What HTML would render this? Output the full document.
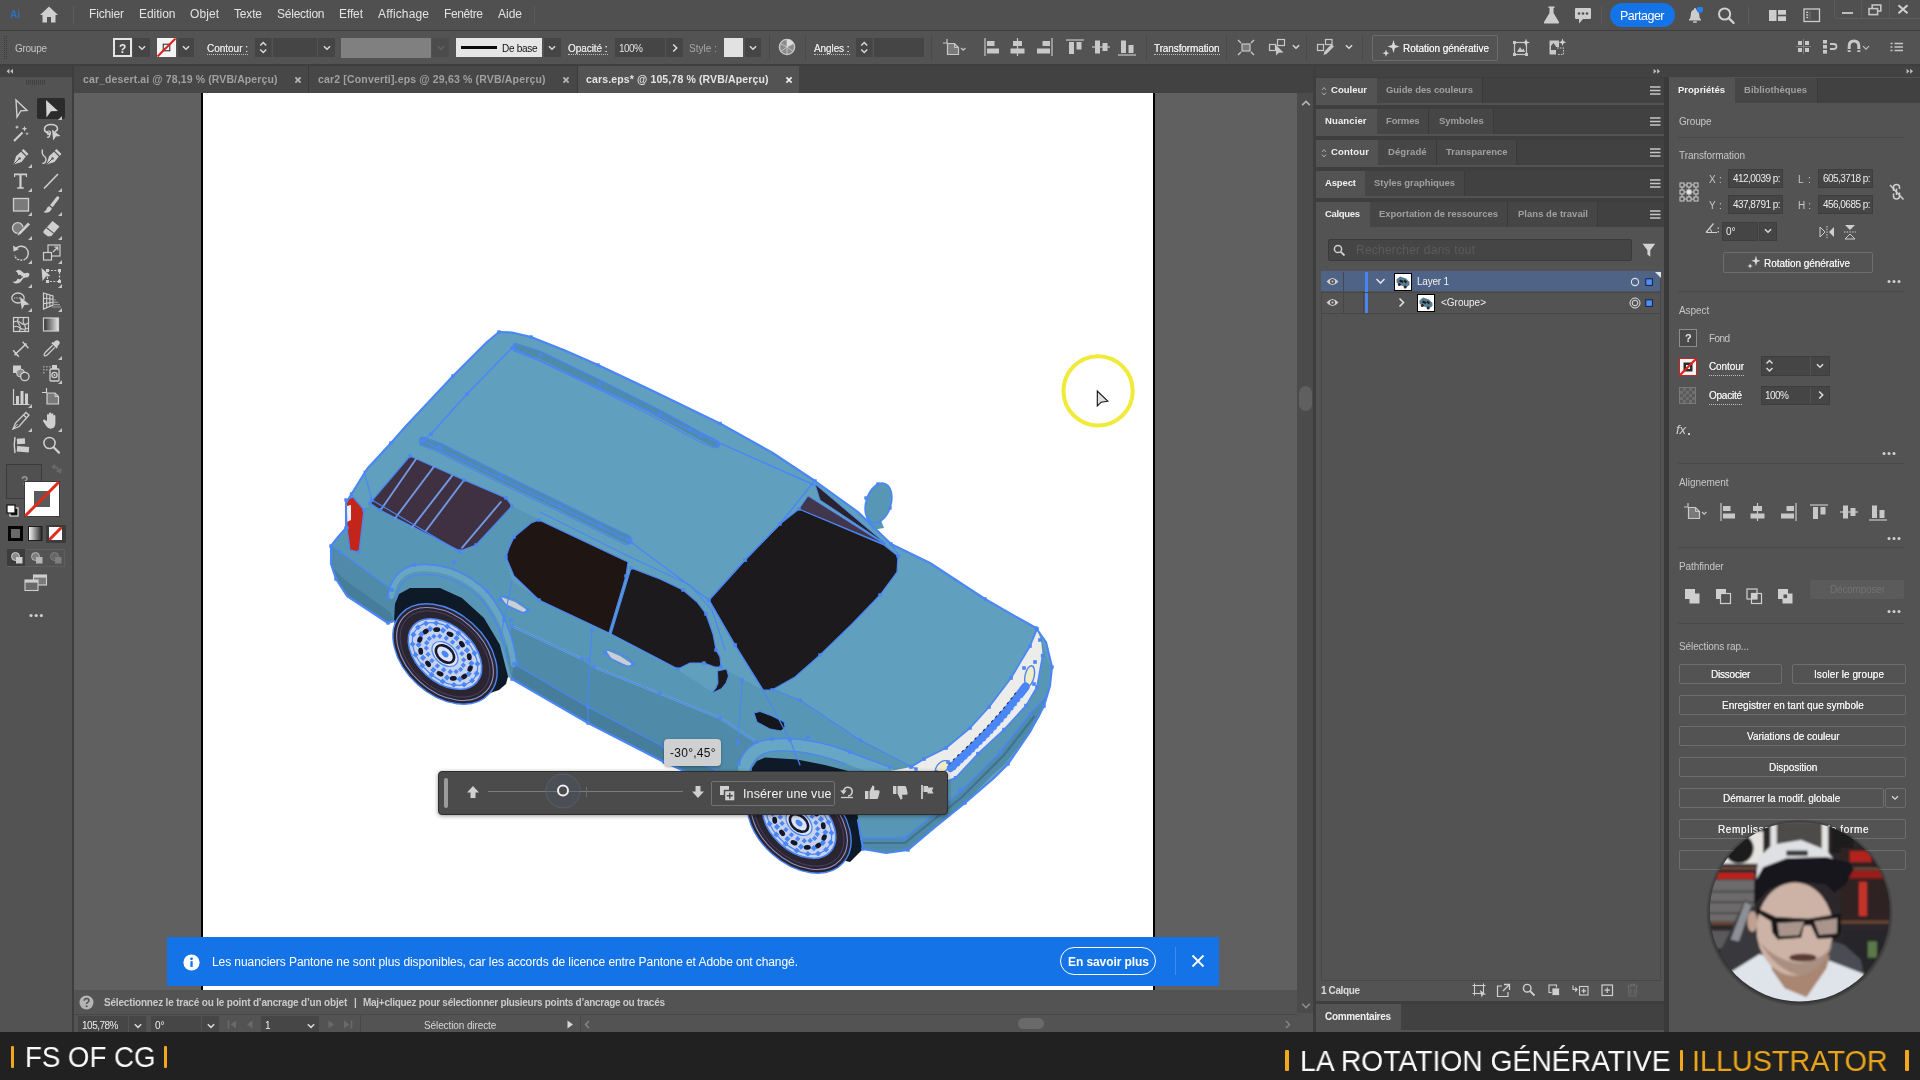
<!DOCTYPE html>
<html><head><meta charset="utf-8"><title>Illustrator</title>
<style>
html,body{margin:0;padding:0;background:#535353;overflow:hidden;}
body{width:1920px;height:1080px;position:relative;overflow:hidden;font-family:"Liberation Sans",sans-serif;}
.b{position:absolute;display:block;}
.t{position:absolute;white-space:nowrap;display:block;will-change:transform;}
.u{border-bottom:1px dotted #c0c0c0;padding-bottom:1px;}
</style></head><body>
<div class="b" style="left:0px;top:0px;width:1920px;height:1080px;background:#535353;"></div>
<div class="b" style="left:0px;top:0px;width:1920px;height:30px;background:#505050;"></div>
<div class="b" style="left:0px;top:30px;width:1920px;height:1px;background:#3d3d3d;"></div>
<div class="b" style="left:0px;top:31px;width:1920px;height:33px;background:#535353;"></div>
<div class="b" style="left:0px;top:64px;width:1920px;height:2px;background:#3e3e3e;"></div>
<div class="b" style="left:0px;top:66px;width:1920px;height:27px;background:#424242;"></div>
<div class="b" style="left:74px;top:93px;width:1223px;height:900px;background:#606060;"></div>
<div class="b" style="left:201px;top:93px;width:954px;height:897px;background:#fff;border-left:2px solid #000;border-right:2px solid #000;box-sizing:border-box;"></div>
<div class="b" style="left:0px;top:66px;width:72px;height:968px;background:#535353;"></div>
<div class="b" style="left:72px;top:66px;width:2px;height:968px;background:#3e3e3e;"></div>
<div class="b" style="left:0px;top:66px;width:72px;height:11px;background:#424242;"></div>
<div class="b" style="left:1297px;top:93px;width:17px;height:920px;background:#4b4b4b;"></div>
<div class="b" style="left:1313px;top:66px;width:3px;height:968px;background:#3e3e3e;"></div>
<div class="b" style="left:74px;top:990px;width:1223px;height:23px;background:#535353;"></div>
<div class="b" style="left:74px;top:1013px;width:1239px;height:21px;background:#535353;"></div>
<div class="b" style="left:1316px;top:66px;width:348px;height:968px;background:#3e3e3e;"></div>
<div class="b" style="left:1664px;top:66px;width:5px;height:968px;background:#3a3a3a;"></div>
<div class="b" style="left:1669px;top:66px;width:251px;height:968px;background:#535353;"></div>
<div class="b" style="left:1316px;top:66px;width:604px;height:11px;background:#424242;"></div>
<div class="b" style="left:0px;top:1034px;width:1920px;height:46px;background:#212121;"></div>
<span class="t" style="left:10.0px;top:10.0px;font-size:10px;line-height:10px;color:#2d6fc4;font-weight:bold;">Ai</span>
<svg class="b" style="left:39px;top:5px;" width="20" height="19" viewBox="0 0 20 19"><path d="M10 1.5 L19 10 H16.5 V17.5 H12 V12 H8 V17.5 H3.5 V10 H1 Z" fill="#cfcfcf"/></svg>
<div class="b" style="left:73px;top:6px;width:1px;height:18px;background:#5e5e5e;"></div>
<span class="t" style="left:89.0px;top:8.0px;font-size:12px;line-height:12px;color:#e2e2e2;letter-spacing:-0.168px;">Fichier</span>
<span class="t" style="left:139.0px;top:8.0px;font-size:12px;line-height:12px;color:#e2e2e2;letter-spacing:-0.032px;">Edition</span>
<span class="t" style="left:190.0px;top:8.0px;font-size:12px;line-height:12px;color:#e2e2e2;letter-spacing:0.080px;">Objet</span>
<span class="t" style="left:234.0px;top:8.0px;font-size:12px;line-height:12px;color:#e2e2e2;letter-spacing:-0.170px;">Texte</span>
<span class="t" style="left:277.0px;top:8.0px;font-size:12px;line-height:12px;color:#e2e2e2;letter-spacing:-0.233px;">Sélection</span>
<span class="t" style="left:339.0px;top:8.0px;font-size:12px;line-height:12px;color:#e2e2e2;letter-spacing:-0.116px;">Effet</span>
<span class="t" style="left:378.0px;top:8.0px;font-size:12px;line-height:12px;color:#e2e2e2;letter-spacing:0.148px;">Affichage</span>
<span class="t" style="left:444.0px;top:8.0px;font-size:12px;line-height:12px;color:#e2e2e2;letter-spacing:-0.393px;">Fenêtre</span>
<span class="t" style="left:498.0px;top:8.0px;font-size:12px;line-height:12px;color:#e2e2e2;letter-spacing:-0.006px;">Aide</span>
<div class="b" style="left:534px;top:6px;width:1px;height:18px;background:#5a5a5a;"></div>
<svg class="b" style="left:1542px;top:5px;" width="19" height="20" viewBox="0 0 19 20"><path d="M6.5 1.5 H12.5 V3 H11.5 V8 L17 17 Q17.5 18.5 16 18.5 H3 Q1.5 18.5 2 17 L7.5 8 V3 H6.5 Z" fill="#cdcdcd"/></svg>
<svg class="b" style="left:1574px;top:7px;" width="18" height="18" viewBox="0 0 18 18"><path d="M2 1 H16 Q17 1 17 2 V11 Q17 12 16 12 H9 L5 16.5 V12 H2 Q1 12 1 11 V2 Q1 1 2 1 Z" fill="#cdcdcd"/><circle cx="5" cy="6.5" r="1.3" fill="#505050"/><circle cx="9" cy="6.5" r="1.3" fill="#505050"/><circle cx="13" cy="6.5" r="1.3" fill="#505050"/></svg>
<div class="b" style="left:1601px;top:6px;width:1px;height:18px;background:#5a5a5a;"></div>
<div class="b" style="left:1609.5px;top:3px;width:65px;height:24px;background:#1473e6;border-radius:12px;"></div>
<span class="t" style="left:1620.0px;top:10.0px;font-size:12.5px;line-height:12.5px;color:#fff;letter-spacing:-0.491px;">Partager</span>
<svg class="b" style="left:1686px;top:7px;" width="18" height="17" viewBox="0 0 18 17"><path d="M8 1.5 Q9 0.5 10 1.5 V2.6 Q13.2 3.6 13.2 7.5 Q13.2 11 15 12.6 V13.4 H3 V12.6 Q4.8 11 4.8 7.5 Q4.8 3.6 8 2.6 Z" fill="#cdcdcd"/><rect x="7" y="14.2" width="4" height="1.6" rx="0.8" fill="#cdcdcd"/><circle cx="13.8" cy="2.6" r="3.2" fill="#2680eb"/></svg>
<svg class="b" style="left:1716px;top:6px;" width="20" height="19" viewBox="0 0 20 19"><circle cx="8.6" cy="8" r="5.6" fill="none" stroke="#d0d0d0" stroke-width="2"/><path d="M12.8 12.2 L17.6 17" stroke="#d0d0d0" stroke-width="2.4" stroke-linecap="round"/></svg>
<div class="b" style="left:1748px;top:7px;width:1px;height:17px;background:#5e5e5e;"></div>
<svg class="b" style="left:1768px;top:9px;" width="19" height="13" viewBox="0 0 19 13"><rect x="1" y="1" width="7.5" height="11" fill="#cdcdcd"/><rect x="10" y="1" width="8" height="4.7" fill="#cdcdcd"/><rect x="10" y="7.3" width="8" height="4.7" fill="#cdcdcd"/></svg>
<svg class="b" style="left:1803px;top:8px;" width="18" height="15" viewBox="0 0 18 15"><rect x="1" y="1" width="15.5" height="12.5" fill="none" stroke="#cdcdcd" stroke-width="1.3"/><rect x="3.2" y="3.6" width="2" height="1.4" fill="#cdcdcd"/><rect x="3.2" y="6.2" width="2" height="1.4" fill="#cdcdcd"/><rect x="3.2" y="8.8" width="2" height="1.4" fill="#cdcdcd"/><path d="M7 3 V11.5" stroke="#777" stroke-width="1"/></svg>
<div class="b" style="left:1834px;top:-2px;width:86px;height:21px;border:1px solid #5c5c5c;border-right:0;border-radius:0 0 0 4px;box-sizing:border-box;"></div>
<div class="b" style="left:1861px;top:0px;width:1px;height:18px;background:#5a5a5a;"></div>
<div class="b" style="left:1889px;top:0px;width:1px;height:18px;background:#5a5a5a;"></div>
<div class="b" style="left:1842px;top:11.5px;width:10.5px;height:2.5px;background:#bdbdbd;"></div>
<svg class="b" style="left:1868px;top:4px;" width="14" height="12" viewBox="0 0 14 12"><rect x="4.2" y="1" width="8.6" height="6" fill="none" stroke="#c4c4c4" stroke-width="1.6"/><rect x="1" y="4.6" width="8.6" height="6" fill="#505050" stroke="#c4c4c4" stroke-width="1.6"/></svg>
<svg class="b" style="left:1897px;top:4px;" width="12" height="11" viewBox="0 0 12 11"><path d="M1.5 1.2 L10.5 9.2 M10.5 1.2 L1.5 9.2" stroke="#d0d0d0" stroke-width="2"/></svg>
<svg class="b" style="left:3px;top:35px;" width="6" height="26" viewBox="0 0 6 26"><rect x="1" y="1" width="1" height="1" fill="#3c3c3c"/><rect x="1" y="3" width="1" height="1" fill="#3c3c3c"/><rect x="1" y="5" width="1" height="1" fill="#3c3c3c"/><rect x="1" y="7" width="1" height="1" fill="#3c3c3c"/><rect x="1" y="9" width="1" height="1" fill="#3c3c3c"/><rect x="1" y="11" width="1" height="1" fill="#3c3c3c"/><rect x="1" y="13" width="1" height="1" fill="#3c3c3c"/><rect x="1" y="15" width="1" height="1" fill="#3c3c3c"/><rect x="1" y="17" width="1" height="1" fill="#3c3c3c"/><rect x="1" y="19" width="1" height="1" fill="#3c3c3c"/><rect x="1" y="21" width="1" height="1" fill="#3c3c3c"/><rect x="1" y="23" width="1" height="1" fill="#3c3c3c"/><rect x="3" y="1" width="1" height="1" fill="#3c3c3c"/><rect x="3" y="3" width="1" height="1" fill="#3c3c3c"/><rect x="3" y="5" width="1" height="1" fill="#3c3c3c"/><rect x="3" y="7" width="1" height="1" fill="#3c3c3c"/><rect x="3" y="9" width="1" height="1" fill="#3c3c3c"/><rect x="3" y="11" width="1" height="1" fill="#3c3c3c"/><rect x="3" y="13" width="1" height="1" fill="#3c3c3c"/><rect x="3" y="15" width="1" height="1" fill="#3c3c3c"/><rect x="3" y="17" width="1" height="1" fill="#3c3c3c"/><rect x="3" y="19" width="1" height="1" fill="#3c3c3c"/><rect x="3" y="21" width="1" height="1" fill="#3c3c3c"/><rect x="3" y="23" width="1" height="1" fill="#3c3c3c"/></svg>
<span class="t" style="left:15.0px;top:44.0px;font-size:10px;line-height:10px;color:#c4c4c4;letter-spacing:-0.272px;">Groupe</span>
<div class="b" style="left:113px;top:38px;width:19px;height:19px;background:#4a4a4a;border:2px solid #e4e4e4;box-sizing:border-box;"></div>
<span class="t" style="left:119.2px;top:43.0px;font-size:12px;line-height:12px;color:#e6e6e6;font-weight:bold;">?</span>
<div class="b" style="left:133px;top:38px;width:16.5px;height:19px;background:#454545;"></div>
<svg class="b" style="left:135.5px;top:42.8px;" width="12" height="10" viewBox="0 0 12 10"><path d="M2.9 3.2 l3.1 3.1 l3.1 -3.1" fill="none" stroke="#d8d8d8" stroke-width="1.5"/></svg>
<svg class="b" style="left:157px;top:38px;" width="19" height="19" viewBox="0 0 19 19"><rect width="19" height="19" fill="#f4f4f4"/><rect x="6.2" y="6.2" width="6.6" height="6.6" fill="none" stroke="#222" stroke-width="1"/><path d="M0.5 18.5 L18.5 0.5" stroke="#e0201a" stroke-width="2"/></svg>
<div class="b" style="left:177.5px;top:38px;width:16.5px;height:19px;background:#454545;"></div>
<svg class="b" style="left:179.7px;top:42.8px;" width="12" height="10" viewBox="0 0 12 10"><path d="M2.9 3.2 l3.1 3.1 l3.1 -3.1" fill="none" stroke="#d8d8d8" stroke-width="1.5"/></svg>
<span class="t" style="left:207.0px;top:44.0px;font-size:10px;line-height:10px;color:#e4e4e4;letter-spacing:-0.018px;text-shadow:0 0 0.4px #e4e4e4;">Contour :</span>
<div class="b" style="left:207px;top:52.6px;width:41px;height:1px;border-bottom:1px dotted #bdbdbd;"></div>
<svg class="b" style="left:255px;top:38px;" width="16.5" height="19" viewBox="0 0 16.5 19"><rect width="16.5" height="19" fill="#454545"/><path d="M5.25 7.5 l3 -3 l3 3 M5.25 11.5 l3 3 l3 -3" fill="none" stroke="#d8d8d8" stroke-width="1.5"/></svg>
<div class="b" style="left:272.5px;top:38px;width:44.5px;height:19px;background:#454545;"></div>
<div class="b" style="left:318px;top:38px;width:17px;height:19px;background:#454545;"></div>
<svg class="b" style="left:320.5px;top:42.8px;" width="12" height="10" viewBox="0 0 12 10"><path d="M2.9 3.2 l3.1 3.1 l3.1 -3.1" fill="none" stroke="#d8d8d8" stroke-width="1.5"/></svg>
<div class="b" style="left:341px;top:37.5px;width:89.5px;height:20px;background:#808080;"></div>
<div class="b" style="left:432px;top:38px;width:17px;height:19px;background:#4c4c4c;"></div>
<svg class="b" style="left:434.5px;top:42.8px;" width="12" height="10" viewBox="0 0 12 10"><path d="M2.9 3.2 l3.1 3.1 l3.1 -3.1" fill="none" stroke="#636363" stroke-width="1.5"/></svg>
<div class="b" style="left:456px;top:38px;width:86px;height:19px;background:#e6e6e6;"></div>
<div class="b" style="left:461px;top:45.7px;width:36px;height:3.3px;background:#0a0a0a;"></div>
<span class="t" style="left:501.5px;top:44.0px;font-size:10px;line-height:10px;color:#111;letter-spacing:-0.292px;">De base</span>
<div class="b" style="left:544px;top:38px;width:16.5px;height:19px;background:#454545;"></div>
<svg class="b" style="left:546px;top:42.8px;" width="12" height="10" viewBox="0 0 12 10"><path d="M2.9 3.2 l3.1 3.1 l3.1 -3.1" fill="none" stroke="#d8d8d8" stroke-width="1.5"/></svg>
<span class="t" style="left:568.0px;top:44.0px;font-size:10px;line-height:10px;color:#e4e4e4;letter-spacing:-0.066px;text-shadow:0 0 0.4px #e4e4e4;">Opacité :</span>
<div class="b" style="left:568px;top:52.6px;width:39.5px;height:1px;border-bottom:1px dotted #bdbdbd;"></div>
<div class="b" style="left:615px;top:38px;width:50px;height:19px;background:#454545;"></div>
<span class="t" style="left:618.5px;top:44.0px;font-size:10px;line-height:10px;color:#e0e0e0;letter-spacing:-0.527px;">100%</span>
<div class="b" style="left:666px;top:38px;width:16.5px;height:19px;background:#454545;"></div>
<svg class="b" style="left:669.5px;top:41.5px;" width="10" height="12" viewBox="0 0 10 12"><path d="M3.2 2.5 l3.5 3.5 l-3.5 3.5" fill="none" stroke="#d8d8d8" stroke-width="1.6"/></svg>
<span class="t" style="left:689.0px;top:44.0px;font-size:10px;line-height:10px;color:#a6a6a6;letter-spacing:0.035px;">Style :</span>
<div class="b" style="left:724px;top:38px;width:19px;height:19px;background:#e2e2e2;"></div>
<div class="b" style="left:744.5px;top:38px;width:16.5px;height:19px;background:#454545;"></div>
<svg class="b" style="left:746.5px;top:42.8px;" width="12" height="10" viewBox="0 0 12 10"><path d="M2.9 3.2 l3.1 3.1 l3.1 -3.1" fill="none" stroke="#d8d8d8" stroke-width="1.5"/></svg>
<div class="b" style="left:769px;top:34px;width:1px;height:27px;background:#4a4a4a;"></div>
<svg class="b" style="left:778px;top:38px;" width="18" height="18" viewBox="0 0 18 18"><circle cx="9" cy="9" r="7.6" fill="#8a8a8a" stroke="#c8c8c8" stroke-width="1.4"/><path d="M9 9 L9 1.6 M9 9 L15.6 5.5 M9 9 L15 13.4 M9 9 L9 16.4 M9 9 L3 13.4 M9 9 L2.4 5.5" stroke="#c8c8c8" stroke-width="0.9"/><path d="M9 9 L9 1.6 A7.4 7.4 0 0 1 15.6 5.5 Z" fill="#dcdcdc"/></svg>
<div class="b" style="left:805px;top:34px;width:1px;height:27px;background:#4a4a4a;"></div>
<span class="t" style="left:814.0px;top:44.0px;font-size:10px;line-height:10px;color:#e4e4e4;letter-spacing:-0.091px;text-shadow:0 0 0.4px #e4e4e4;">Angles :</span>
<div class="b" style="left:814px;top:52.6px;width:35.5px;height:1px;border-bottom:1px dotted #bdbdbd;"></div>
<svg class="b" style="left:856px;top:38px;" width="16.5" height="19" viewBox="0 0 16.5 19"><rect width="16.5" height="19" fill="#454545"/><path d="M5.25 7.5 l3 -3 l3 3 M5.25 11.5 l3 3 l3 -3" fill="none" stroke="#d8d8d8" stroke-width="1.5"/></svg>
<div class="b" style="left:873.5px;top:38px;width:50.5px;height:19px;background:#454545;"></div>
<div class="b" style="left:931px;top:34px;width:1px;height:27px;background:#4a4a4a;"></div>
<svg class="b" style="left:942px;top:38px;" width="25" height="18" viewBox="0 0 25 18"><path d="M5 1 V5 M1 5 H5" stroke="#c8c8c8" stroke-width="1.2" fill="none"/><path d="M5.5 5.5 H12.5 L16.5 9.5 V16.5 H5.5 Z" fill="#7a7a7a" stroke="#c8c8c8" stroke-width="1.2"/><path d="M12.5 5.5 V9.5 H16.5" fill="none" stroke="#c8c8c8" stroke-width="1"/><path d="M19 10 l2.2 2.2 l2.2 -2.2" fill="none" stroke="#c8c8c8" stroke-width="1.2"/></svg>
<svg class="b" style="left:984px;top:37.5px;" width="16" height="18" viewBox="0 0 16 18"><path d="M1 0 V18" stroke="#c8c8c8" stroke-width="1.2"/><rect x="3" y="3" width="7.5" height="5" fill="#c8c8c8"/><rect x="3" y="10.5" width="12" height="5" fill="#c8c8c8"/></svg>
<svg class="b" style="left:1010px;top:37.5px;" width="15" height="18" viewBox="0 0 15 18"><path d="M7.5 0 V18" stroke="#c8c8c8" stroke-width="1.2"/><rect x="3" y="3" width="9" height="5" fill="#c8c8c8"/><rect x="0.5" y="10.5" width="14" height="5" fill="#c8c8c8"/></svg>
<svg class="b" style="left:1036px;top:37.5px;" width="17" height="18" viewBox="0 0 17 18"><path d="M16 0 V18" stroke="#c8c8c8" stroke-width="1.2"/><rect x="6.5" y="3" width="7.5" height="5" fill="#c8c8c8"/><rect x="1" y="10.5" width="13" height="5" fill="#c8c8c8"/></svg>
<svg class="b" style="left:1066px;top:37.5px;" width="18" height="18" viewBox="0 0 18 18"><path d="M0 2 H18" stroke="#c8c8c8" stroke-width="1.2"/><rect x="3" y="4" width="5" height="12" fill="#c8c8c8"/><rect x="10.5" y="4" width="5" height="7.5" fill="#c8c8c8"/></svg>
<svg class="b" style="left:1092px;top:37.5px;" width="18" height="18" viewBox="0 0 18 18"><path d="M0 9 H18" stroke="#c8c8c8" stroke-width="1.2"/><rect x="3" y="2.5" width="5" height="13" fill="#c8c8c8"/><rect x="10.5" y="5" width="5" height="8" fill="#c8c8c8"/></svg>
<svg class="b" style="left:1118px;top:37.5px;" width="18" height="18" viewBox="0 0 18 18"><path d="M0 17 H18" stroke="#c8c8c8" stroke-width="1.2"/><rect x="3" y="2.5" width="5" height="12.5" fill="#c8c8c8"/><rect x="10.5" y="7" width="5" height="8" fill="#c8c8c8"/></svg>
<div class="b" style="left:1146px;top:34px;width:1px;height:27px;background:#4a4a4a;"></div>
<span class="t" style="left:1154.0px;top:44.0px;font-size:10px;line-height:10px;color:#ececec;letter-spacing:-0.107px;text-shadow:0 0 0.4px #ececec;">Transformation</span>
<div class="b" style="left:1154px;top:52.6px;width:65.5px;height:1px;border-bottom:1px dotted #bdbdbd;"></div>
<div class="b" style="left:1226px;top:34px;width:1px;height:27px;background:#4a4a4a;"></div>
<svg class="b" style="left:1237px;top:39px;" width="18" height="17" viewBox="0 0 18 17"><rect x="5" y="5" width="8" height="7" fill="#7a7a7a" stroke="#c8c8c8" stroke-width="1.2"/><path d="M1 1 L4 4 M17 1 L14 4 M1 16 L4 13 M17 16 L14 13" stroke="#c8c8c8" stroke-width="1.4"/><path d="M1.5 4.5 V1.5 H4.5 M13.5 1.5 H16.5 V4.5 M1.5 12.5 V15.5 H4.5 M16.5 12.5 V15.5 H13.5" fill="none" stroke="#c8c8c8" stroke-width="0"/></svg>
<svg class="b" style="left:1268px;top:38px;" width="19" height="19" viewBox="0 0 19 19"><rect x="9.5" y="1.5" width="7" height="6" fill="none" stroke="#c8c8c8" stroke-width="1.2"/><rect x="1.5" y="6.5" width="6" height="6" fill="none" stroke="#c8c8c8" stroke-width="1.2"/><path d="M8 7 V17.5 L10.8 14.8 L15.5 14.5 Z" fill="#c8c8c8"/></svg>
<svg class="b" style="left:1289.5px;top:42px;" width="12" height="10" viewBox="0 0 12 10"><path d="M2.9 3.2 l3.1 3.1 l3.1 -3.1" fill="none" stroke="#d8d8d8" stroke-width="1.5"/></svg>
<div class="b" style="left:1306px;top:34px;width:1px;height:27px;background:#4a4a4a;"></div>
<svg class="b" style="left:1316px;top:38px;" width="20" height="19" viewBox="0 0 20 19"><rect x="1.5" y="6.5" width="6" height="6" fill="none" stroke="#c8c8c8" stroke-width="1.2"/><rect x="9.5" y="1.5" width="6.5" height="5" fill="none" stroke="#c8c8c8" stroke-width="1.2"/><path d="M15.5 6 L18 8.5 L10.5 16 L7.5 17 L8.5 13.5 Z" fill="#c8c8c8"/></svg>
<svg class="b" style="left:1343px;top:42px;" width="12" height="10" viewBox="0 0 12 10"><path d="M2.9 3.2 l3.1 3.1 l3.1 -3.1" fill="none" stroke="#d8d8d8" stroke-width="1.5"/></svg>
<div class="b" style="left:1362px;top:34px;width:1px;height:27px;background:#4a4a4a;"></div>
<div class="b" style="left:1372px;top:34.5px;width:126px;height:26px;border:1px solid #6c6c6c;border-radius:2px;box-sizing:border-box;"></div>
<svg class="b" style="left:1382px;top:39px;" width="18" height="18" viewBox="0 0 18 18"><path d="M11.5 1 L13 6 L17.5 7.5 L13 9 L11.5 14 L10 9 L5.5 7.5 L10 6 Z" fill="#d8d8d8"/><path d="M4 10.5 L5 13.3 L7.6 14.2 L5 15.1 L4 17.8 L3 15.1 L0.4 14.2 L3 13.3 Z" fill="#d8d8d8"/></svg>
<span class="t" style="left:1403.0px;top:44.0px;font-size:10px;line-height:10px;color:#f0f0f0;letter-spacing:-0.041px;text-shadow:0 0 0.4px #f0f0f0;">Rotation générative</span>
<svg class="b" style="left:1512px;top:38px;" width="19" height="19" viewBox="0 0 19 19"><rect x="2.5" y="4.5" width="12" height="12" fill="none" stroke="#c8c8c8" stroke-width="1.2"/><rect x="1" y="3" width="3" height="3" fill="#c8c8c8"/><rect x="1" y="15" width="3" height="3" fill="#c8c8c8"/><rect x="13" y="15" width="3" height="3" fill="#c8c8c8"/><path d="M5 14 L8 9 L10 12 L11.5 10.5 L13 14 Z" fill="#c8c8c8"/><path d="M14 0.5 L15 3.5 L18 4.5 L15 5.5 L14 8.5 L13 5.5 L10 4.5 L13 3.5 Z" fill="#d4d4d4"/></svg>
<svg class="b" style="left:1548px;top:38px;" width="19" height="19" viewBox="0 0 19 19"><path d="M1.5 2.5 H11 V9 H8 V16.5 H1.5 Z" fill="#c8c8c8"/><path d="M3 8 L5.5 5 L8 8.5 L8 12 L3 12 Z" fill="#535353"/><path d="M9 10 H15.5 V16.5 H9" fill="none" stroke="#c8c8c8" stroke-width="1.1" stroke-dasharray="1.6 1.2"/><path d="M14.5 0.5 L15.5 3.3 L18.3 4.3 L15.5 5.3 L14.5 8.1 L13.5 5.3 L10.7 4.3 L13.5 3.3 Z" fill="#d4d4d4"/></svg>
<svg class="b" style="left:1796px;top:39px;" width="15" height="15" viewBox="0 0 15 15"><rect x="2" y="2" width="4" height="4" fill="#c8c8c8"/><rect x="9" y="2" width="4" height="4" fill="#c8c8c8"/><rect x="2" y="9" width="4" height="4" fill="#c8c8c8"/><rect x="9" y="9" width="4" height="4" fill="#c8c8c8"/><path d="M7.5 0 V15 M0 7.5 H15" stroke="#8c8c8c" stroke-width="0.8"/></svg>
<svg class="b" style="left:1822px;top:39px;" width="16" height="16" viewBox="0 0 16 16"><rect x="1" y="1" width="4" height="3.6" fill="#c8c8c8"/><rect x="1" y="6" width="4" height="3.6" fill="#c8c8c8"/><rect x="1" y="11" width="4" height="3.6" fill="#c8c8c8"/><path d="M8 5 H11.5 Q14.5 5 14.5 7.5 Q14.5 10 11.5 10 H8" fill="none" stroke="#c8c8c8" stroke-width="1.8"/></svg>
<svg class="b" style="left:1847px;top:39px;" width="14" height="15" viewBox="0 0 14 15"><path d="M2.2 13 V7 Q2.2 2 7 2 Q11.8 2 11.8 7 V13" fill="none" stroke="#c8c8c8" stroke-width="3"/><path d="M0.5 10.6 H4 M10 10.6 H13.5" stroke="#535353" stroke-width="1.1"/></svg>
<svg class="b" style="left:1860px;top:42.5px;" width="12" height="10" viewBox="0 0 12 10"><path d="M3 3.2 l3 3 l3 -3" fill="none" stroke="#bdbdbd" stroke-width="1.2"/></svg>
<svg class="b" style="left:1890px;top:42px;" width="14" height="10" viewBox="0 0 14 10"><path d="M0.5 1.5 H2.5 M0.5 5 H2.5 M0.5 8.5 H2.5" stroke="#c8c8c8" stroke-width="1.6"/><path d="M4.5 1.5 H13 M4.5 5 H13 M4.5 8.5 H13" stroke="#c8c8c8" stroke-width="1.3"/></svg>
<div class="b" style="left:74px;top:66px;width:234px;height:27px;background:#474747;"></div>
<div class="b" style="left:308px;top:66px;width:1px;height:27px;background:#3a3a3a;"></div>
<div class="b" style="left:309px;top:66px;width:268px;height:27px;background:#474747;"></div>
<div class="b" style="left:577px;top:66px;width:1px;height:27px;background:#3a3a3a;"></div>
<div class="b" style="left:578px;top:66px;width:221px;height:27px;background:#535353;"></div>
<span class="t" style="left:83.0px;top:74.0px;font-size:10.5px;line-height:10.5px;color:#a0a0a0;font-weight:bold;letter-spacing:0.118px;">car_desert.ai @ 78,19 % (RVB/Aperçu)</span>
<span class="t" style="left:318.0px;top:74.0px;font-size:10.5px;line-height:10.5px;color:#a0a0a0;font-weight:bold;letter-spacing:0.166px;">car2 [Converti].eps @ 29,63 % (RVB/Aperçu)</span>
<span class="t" style="left:586.0px;top:74.0px;font-size:10.5px;line-height:10.5px;color:#e4e4e4;font-weight:bold;letter-spacing:0.137px;">cars.eps* @ 105,78 % (RVB/Aperçu)</span>
<svg class="b" style="left:293.5px;top:75.5px;" width="8" height="8" viewBox="0 0 8 8"><path d="M1.4 1.4 L6.6 6.6 M6.6 1.4 L1.4 6.6" stroke="#b8b8b8" stroke-width="1.7"/></svg>
<svg class="b" style="left:561.5px;top:75.5px;" width="8" height="8" viewBox="0 0 8 8"><path d="M1.4 1.4 L6.6 6.6 M6.6 1.4 L1.4 6.6" stroke="#b8b8b8" stroke-width="1.7"/></svg>
<svg class="b" style="left:784.5px;top:75.5px;" width="8" height="8" viewBox="0 0 8 8"><path d="M1.4 1.4 L6.6 6.6 M6.6 1.4 L1.4 6.6" stroke="#ececec" stroke-width="1.7"/></svg>
<svg class="b" style="left:6px;top:67.5px;" width="8" height="7" viewBox="0 0 8 7"><path d="M3.4 0.8 L0.6 3.3 L3.4 5.8 Z M7 0.8 L4.2 3.3 L7 5.8 Z" fill="#c0c0c0"/></svg>
<svg class="b" style="left:24.5px;top:79.5px;" width="22" height="6" viewBox="0 0 22 6"><rect x="1" y="0" width="1" height="5" fill="#414141"/><rect x="3" y="0" width="1" height="5" fill="#414141"/><rect x="5" y="0" width="1" height="5" fill="#414141"/><rect x="7" y="0" width="1" height="5" fill="#414141"/><rect x="9" y="0" width="1" height="5" fill="#414141"/><rect x="11" y="0" width="1" height="5" fill="#414141"/><rect x="13" y="0" width="1" height="5" fill="#414141"/><rect x="15" y="0" width="1" height="5" fill="#414141"/><rect x="17" y="0" width="1" height="5" fill="#414141"/><rect x="19" y="0" width="1" height="5" fill="#414141"/></svg>
<svg class="b" style="left:1653px;top:67.5px;" width="8" height="7" viewBox="0 0 8 7"><path d="M0.6 0.8 L3.4 3.3 L0.6 5.8 Z M4.2 0.8 L7 3.3 L4.2 5.8 Z" fill="#c0c0c0"/></svg>
<svg class="b" style="left:1906px;top:67.5px;" width="8" height="7" viewBox="0 0 8 7"><path d="M0.6 0.8 L3.4 3.3 L0.6 5.8 Z M4.2 0.8 L7 3.3 L4.2 5.8 Z" fill="#c0c0c0"/></svg>
<div class="b" style="left:37px;top:97.5px;width:28px;height:21.5px;background:#2b2b2b;border-radius:2px;"></div>
<svg class="b" style="left:9px;top:96.5px;" width="24" height="24" viewBox="0 0 24 24"><path d="M7 3 L18 13.5 L11.8 13.9 L8 20 Z" fill="none" stroke="#cfcfcf" stroke-width="1.4" stroke-linejoin="miter"/></svg>
<svg class="b" style="left:39px;top:96.5px;" width="24" height="24" viewBox="0 0 24 24"><path d="M7 3 L19 14 L12 14.3 L7.5 20.5 Z" fill="#d4d4d4"/><path d="M23 19 V23 H19 Z" fill="#c4c4c4"/></svg>
<svg class="b" style="left:9px;top:120.5px;" width="24" height="24" viewBox="0 0 24 24"><path d="M5 20 L13.5 11.5" stroke="#cfcfcf" stroke-width="2.2"/><path d="M15.5 5 l.8 2 l2 .8 l-2 .8 l-.8 2 l-.8 -2 l-2 -.8 l2 -.8 Z M8 4 l.6 1.5 l1.5 .6 l-1.5 .6 l-.6 1.5 l-.6 -1.5 l-1.5 -.6 l1.5 -.6 Z M18 11 l.5 1.2 l1.2 .5 l-1.2 .5 l-.5 1.2 l-.5 -1.2 l-1.2 -.5 l1.2 -.5 Z" fill="#cfcfcf"/></svg>
<svg class="b" style="left:39px;top:120.5px;" width="24" height="24" viewBox="0 0 24 24"><path d="M9.5 12 Q5 11 5.5 7.5 Q6.5 3.5 12 3.5 Q18 3.5 18.5 7.5 Q18.5 10 16 10.5 M9.5 12 Q11.5 12.5 10.5 15 Q9.5 17 8 16" fill="none" stroke="#cfcfcf" stroke-width="1.5"/><circle cx="9.8" cy="11.8" r="1.8" fill="none" stroke="#cfcfcf" stroke-width="1.2"/><path d="M13 8.5 L21.5 15 L17 15.6 L14.2 19.5 Z" fill="#cfcfcf"/></svg>
<svg class="b" style="left:9px;top:144.5px;" width="24" height="24" viewBox="0 0 24 24"><path d="M14.5 4 L19.5 9 L17.8 10.8 L12.7 5.8 Z" fill="#cfcfcf"/><path d="M12 6.8 L16.8 11.6 L12.5 17 L4.5 19.5 L7 11.2 Z" fill="#cfcfcf"/><path d="M5 19 L10 14" stroke="#535353" stroke-width="1"/><circle cx="10.6" cy="13.4" r="1.2" fill="#535353"/><path d="M23 19 V23 H19 Z" fill="#c4c4c4"/></svg>
<svg class="b" style="left:39px;top:144.5px;" width="24" height="24" viewBox="0 0 24 24"><g transform="translate(3,0)"><path d="M14.5 4 L19.5 9 L17.8 10.8 L12.7 5.8 Z" fill="#cfcfcf"/><path d="M12 6.8 L16.8 11.6 L12.5 17 L4.5 19.5 L7 11.2 Z" fill="#cfcfcf"/><path d="M5 19 L10 14" stroke="#535353" stroke-width="1"/><circle cx="10.6" cy="13.4" r="1.2" fill="#535353"/></g><path d="M3.5 4.5 Q2.5 9 5 11 Q8 13 6.5 16.5 Q5.5 19 3.5 18" fill="none" stroke="#cfcfcf" stroke-width="1.4"/></svg>
<svg class="b" style="left:9px;top:168.5px;" width="24" height="24" viewBox="0 0 24 24"><path d="M5 4.5 H18 V8 H16.8 V6.3 H12.6 V18.3 H14.8 V19.8 H8.2 V18.3 H10.4 V6.3 H6.2 V8 H5 Z" fill="#cfcfcf"/><path d="M23 19 V23 H19 Z" fill="#c4c4c4"/></svg>
<svg class="b" style="left:39px;top:168.5px;" width="24" height="24" viewBox="0 0 24 24"><path d="M5 19.5 L19 5" stroke="#cfcfcf" stroke-width="1.6"/><path d="M23 19 V23 H19 Z" fill="#c4c4c4"/></svg>
<svg class="b" style="left:9px;top:192.5px;" width="24" height="24" viewBox="0 0 24 24"><rect x="4.5" y="5.5" width="15" height="12.5" fill="#7a7a7a" stroke="#cfcfcf" stroke-width="1.3"/><path d="M23 19 V23 H19 Z" fill="#c4c4c4"/></svg>
<svg class="b" style="left:39px;top:192.5px;" width="24" height="24" viewBox="0 0 24 24"><path d="M19.5 3.5 Q20.8 4 20 5.8 L13.6 14.2 L11 12.2 L17.4 4 Q18.5 3 19.5 3.5 Z" fill="#cfcfcf"/><path d="M10.2 13.2 L12.8 15.2 Q12 18.5 8.5 19.5 Q6 20 4.5 19 Q7.5 17.5 7.8 15.5 Q8.3 13.5 10.2 13.2 Z" fill="#cfcfcf"/><path d="M23 19 V23 H19 Z" fill="#c4c4c4"/></svg>
<svg class="b" style="left:9px;top:216.5px;" width="24" height="24" viewBox="0 0 24 24"><circle cx="8.8" cy="11" r="5.3" fill="#7d7d7d" stroke="#cfcfcf" stroke-width="1.3"/><path d="M19 5.2 L21.3 7.4 L11.5 17.6 L8 19 L9.2 15.6 Z" fill="#cfcfcf" stroke="#535353" stroke-width="0.6"/><path d="M23 19 V23 H19 Z" fill="#c4c4c4"/></svg>
<svg class="b" style="left:39px;top:216.5px;" width="24" height="24" viewBox="0 0 24 24"><path d="M13.5 4 L20.5 9.5 L12.5 19 L9 19.5 L4.5 16 L4.5 14 Z" fill="#cfcfcf"/><path d="M7.6 10.8 L14.8 16.4" stroke="#535353" stroke-width="1.1"/><path d="M23 19 V23 H19 Z" fill="#c4c4c4"/></svg>
<svg class="b" style="left:9px;top:240.5px;" width="24" height="24" viewBox="0 0 24 24"><path d="M7.2 7.4 A7 7 0 1 1 5.6 14.5" fill="none" stroke="#cfcfcf" stroke-width="1.4" stroke-dasharray="2 0"/><path d="M5.6 14.5 A7 7 0 0 0 16.5 18" fill="none" stroke="#535353" stroke-width="1.4" stroke-dasharray="1.6 1.6"/><path d="M4 4.5 L4.6 10.4 L10 8.2 Z" fill="#cfcfcf"/><path d="M23 19 V23 H19 Z" fill="#c4c4c4"/></svg>
<svg class="b" style="left:39px;top:240.5px;" width="24" height="24" viewBox="0 0 24 24"><rect x="9" y="4" width="12" height="11" fill="none" stroke="#cfcfcf" stroke-width="1.2"/><rect x="4.5" y="11.5" width="8" height="7.5" fill="#535353" stroke="#cfcfcf" stroke-width="1.2"/><path d="M14 11 L18.5 6.5 M15.5 6.2 H18.8 V9.5" fill="none" stroke="#cfcfcf" stroke-width="1.2"/><path d="M23 19 V23 H19 Z" fill="#c4c4c4"/></svg>
<svg class="b" style="left:9px;top:264.5px;" width="24" height="24" viewBox="0 0 24 24"><path d="M3.5 16.5 Q7.5 17.5 9 13 Q10 7 6.5 6.5 Q9.5 3 13 6.5 Q15 9 17 8 Q19 7 20.5 9 Q20 13 17 12.5 Q14.5 12 13 15 Q11 18.5 7 18.5 Q4.5 18.5 3.5 16.5 Z" fill="#cfcfcf"/><circle cx="10.5" cy="12" r="2.2" fill="#535353"/><path d="M7 12 H14" stroke="#535353" stroke-width="0.9"/><path d="M23 19 V23 H19 Z" fill="#c4c4c4"/></svg>
<svg class="b" style="left:39px;top:264.5px;" width="24" height="24" viewBox="0 0 24 24"><rect x="8.5" y="5.5" width="12" height="11" fill="none" stroke="#cfcfcf" stroke-width="1.2" stroke-dasharray="2 1.4"/><rect x="7" y="4" width="3" height="3" fill="#cfcfcf"/><rect x="19" y="4" width="3" height="3" fill="#cfcfcf"/><rect x="7" y="15" width="3" height="3" fill="#cfcfcf"/><rect x="19" y="15" width="3" height="3" fill="#cfcfcf"/><path d="M2.5 3 L11.5 11 L7 11.4 L3.5 16 Z" fill="#cfcfcf"/><path d="M23 19 V23 H19 Z" fill="#c4c4c4"/></svg>
<svg class="b" style="left:9px;top:288.5px;" width="24" height="24" viewBox="0 0 24 24"><ellipse cx="9" cy="9" rx="6.2" ry="5" fill="none" stroke="#cfcfcf" stroke-width="1.3"/><path d="M5 9 H11" stroke="#cfcfcf" stroke-width="1.2" stroke-dasharray="1.2 1.2"/><path d="M11 8 L20.5 15.5 L15.5 16 L12.8 20.5 Z" fill="#cfcfcf"/><path d="M23 19 V23 H19 Z" fill="#c4c4c4"/></svg>
<svg class="b" style="left:39px;top:288.5px;" width="24" height="24" viewBox="0 0 24 24"><path d="M4.5 4 V20 L14 16 V7 Z" fill="none" stroke="#cfcfcf" stroke-width="1.2"/><path d="M4.5 9.3 L14 10.3 M4.5 14.6 L14 13.3 M7.7 5 V18.7 M10.9 6 V17.4" stroke="#cfcfcf" stroke-width="1.1"/><path d="M15 11 H17 M14.8 13.3 H19 M14.5 15.6 H21 M13 18 H22" stroke="#9a9a9a" stroke-width="1.2"/><path d="M23 19 V23 H19 Z" fill="#c4c4c4"/></svg>
<svg class="b" style="left:9px;top:312.5px;" width="24" height="24" viewBox="0 0 24 24"><rect x="4.5" y="4.5" width="15" height="14" fill="none" stroke="#cfcfcf" stroke-width="1.2"/><path d="M4.5 9 Q9 7 12 10 Q15 13 19.5 10 M4.5 14 Q8 12 11 15 Q14 17.5 19.5 15 M9.5 4.5 Q7.5 9 10.5 12 Q12.5 15 10 18.5 M15 4.5 Q13 8 15.5 11.5 Q17.5 15 15.5 18.5" fill="none" stroke="#cfcfcf" stroke-width="1.1"/></svg>
<svg class="b" style="left:39px;top:312.5px;" width="24" height="24" viewBox="0 0 24 24"><defs><linearGradient id="tg" x1="0" x2="1"><stop offset="0" stop-color="#2e2e2e"/><stop offset="1" stop-color="#e8e8e8"/></linearGradient></defs><rect x="4.5" y="5" width="15" height="13" fill="url(#tg)" stroke="#cfcfcf" stroke-width="1.2"/></svg>
<svg class="b" style="left:9px;top:336.5px;" width="24" height="24" viewBox="0 0 24 24"><path d="M6.5 17 L16.5 7.5" stroke="#cfcfcf" stroke-width="1.5"/><path d="M4.2 13.2 L9.8 19.8 M13.6 4.6 L19.4 11.2" stroke="#cfcfcf" stroke-width="1.4"/><path d="M5.2 18.4 L6 14.8 L9 18 Z M17.8 6.2 L14.2 6.8 L17.2 9.8 Z" fill="#cfcfcf"/></svg>
<svg class="b" style="left:39px;top:336.5px;" width="24" height="24" viewBox="0 0 24 24"><path d="M17.8 3.2 Q20.5 3 20.8 5.8 Q20.8 7 19.5 8.2 L18.3 9.3 L19 10 L17.6 11.4 L12.4 6.2 L13.8 4.8 L14.6 5.6 L15.8 4.3 Q16.8 3.3 17.8 3.2 Z" fill="#cfcfcf"/><path d="M13.6 8.2 L6 15.8 Q4.6 17.5 5.3 18.7 Q6.5 19.4 8.2 18 L15.8 10.4" fill="none" stroke="#cfcfcf" stroke-width="1.3"/><path d="M23 19 V23 H19 Z" fill="#c4c4c4"/></svg>
<svg class="b" style="left:9px;top:360.5px;" width="24" height="24" viewBox="0 0 24 24"><rect x="4" y="4.5" width="8" height="7.5" fill="#cfcfcf"/><circle cx="11.5" cy="12" r="4" fill="#8a8a8a" stroke="#cfcfcf" stroke-width="1"/><circle cx="15.8" cy="15.5" r="4.2" fill="#535353" stroke="#cfcfcf" stroke-width="1.3"/></svg>
<svg class="b" style="left:39px;top:360.5px;" width="24" height="24" viewBox="0 0 24 24"><rect x="11" y="8" width="9" height="12" rx="1" fill="none" stroke="#cfcfcf" stroke-width="1.3"/><rect x="13" y="4" width="5" height="4" fill="#cfcfcf"/><circle cx="15.5" cy="14" r="2.6" fill="none" stroke="#cfcfcf" stroke-width="1.3"/><circle cx="15.5" cy="14" r="0.9" fill="#cfcfcf"/><path d="M4 5 h1.6 v1.6 h-1.6z M7 5 h1.6 v1.6 h-1.6z M10 5 h1.6 v1.6 h-1.6z M4 8 h1.6 v1.6 h-1.6z M7 8 h1.6 v1.6 h-1.6z M4 11 h1.6 v1.6 h-1.6z" fill="#9c9c9c"/><path d="M23 19 V23 H19 Z" fill="#c4c4c4"/></svg>
<svg class="b" style="left:9px;top:384.5px;" width="24" height="24" viewBox="0 0 24 24"><path d="M4.5 4 V19.5 H20.5" fill="none" stroke="#cfcfcf" stroke-width="1.2"/><rect x="7" y="11" width="3" height="8" fill="#cfcfcf"/><rect x="11.5" y="6" width="3" height="13" fill="#cfcfcf"/><rect x="16" y="8.5" width="3" height="10.5" fill="#cfcfcf"/><path d="M23 19 V23 H19 Z" fill="#c4c4c4"/></svg>
<svg class="b" style="left:39px;top:384.5px;" width="24" height="24" viewBox="0 0 24 24"><path d="M7.5 3 V8 M3 7.5 H8" stroke="#cfcfcf" stroke-width="1.2"/><path d="M8 8 H16 L19.5 11.5 V19 H8 Z" fill="#7a7a7a" stroke="#cfcfcf" stroke-width="1.2"/><path d="M16 8 V11.5 H19.5" fill="none" stroke="#cfcfcf" stroke-width="1"/></svg>
<svg class="b" style="left:9px;top:408.5px;" width="24" height="24" viewBox="0 0 24 24"><path d="M17 3.5 L20 6 L10 17.5 L4 20 L6.5 14 Z" fill="none" stroke="#cfcfcf" stroke-width="1.3"/><path d="M14.5 6 L17.5 8.7" stroke="#cfcfcf" stroke-width="1.2"/><path d="M4 20 L8.6 15" stroke="#cfcfcf" stroke-width="1"/><path d="M23 19 V23 H19 Z" fill="#c4c4c4"/></svg>
<svg class="b" style="left:39px;top:408.5px;" width="24" height="24" viewBox="0 0 24 24"><path d="M8 12 V6.2 Q8 5 9 5 Q10 5 10 6.2 V4.6 Q10 3.4 11.1 3.4 Q12.2 3.4 12.2 4.6 V5.4 Q12.2 4.3 13.3 4.3 Q14.4 4.3 14.4 5.5 V7 Q14.4 6 15.4 6 Q16.4 6 16.4 7.2 V14 Q16.4 19 12.4 19.6 Q9 20 7.6 17.6 L4.2 12.4 Q3.6 11.2 4.6 10.7 Q5.6 10.3 6.4 11.3 Z" fill="#cfcfcf"/><path d="M23 19 V23 H19 Z" fill="#c4c4c4"/></svg>
<svg class="b" style="left:9px;top:432.5px;" width="24" height="24" viewBox="0 0 24 24"><path d="M6 4 Q4.5 12 6 20" fill="none" stroke="#cfcfcf" stroke-width="1.4"/><rect x="8" y="5.5" width="8" height="5.5" fill="#cfcfcf" transform="rotate(-4 12 8)"/><rect x="8" y="13.5" width="12" height="5.5" fill="#cfcfcf" transform="rotate(4 14 16)"/></svg>
<svg class="b" style="left:39px;top:432.5px;" width="24" height="24" viewBox="0 0 24 24"><circle cx="10.5" cy="10" r="5.6" fill="none" stroke="#cfcfcf" stroke-width="1.5"/><path d="M14.6 14.2 L20 19.6" stroke="#cfcfcf" stroke-width="2.2" stroke-linecap="round"/></svg>
<div class="b" style="left:6px;top:463.5px;width:36px;height:35px;background:#505050;border:1px solid #3a3a3a;box-sizing:border-box;"></div>
<span class="t" style="left:20.5px;top:475.0px;font-size:12px;line-height:12px;color:#9a9a9a;font-weight:bold;">?</span>
<svg class="b" style="left:24px;top:481px;" width="36" height="36" viewBox="0 0 36 36"><rect x="0.5" y="0.5" width="35" height="35" fill="#fff" stroke="#3c3c3c"/><rect x="10" y="10" width="16" height="16" fill="#5a5a5a"/><path d="M1 35 L35 1" stroke="#e02a1c" stroke-width="3"/></svg>
<svg class="b" style="left:50px;top:463px;" width="14" height="14" viewBox="0 0 14 14"><path d="M2 4 Q8 3 10 9 M6.5 7.5 L10 9.5 L11.5 5.5" fill="none" stroke="#6a6a6a" stroke-width="1.6"/><path d="M2 4 L5 1.5 M2 4 L5 6" stroke="#6a6a6a" stroke-width="1.4"/></svg>
<svg class="b" style="left:6px;top:504px;" width="13" height="13" viewBox="0 0 13 13"><rect x="4" y="4" width="8" height="8" fill="#111" stroke="#fff" stroke-width="1"/><rect x="1" y="1" width="8" height="8" fill="#fff" stroke="#111" stroke-width="1.2"/></svg>
<div class="b" style="left:45.5px;top:524.5px;width:20px;height:18.5px;background:#3c3c3c;"></div>
<svg class="b" style="left:8px;top:526px;" width="15" height="15" viewBox="0 0 15 15"><rect x="1.5" y="1.5" width="12" height="12" fill="#6a6a6a" stroke="#050505" stroke-width="3"/></svg>
<svg class="b" style="left:28px;top:526px;" width="15" height="15" viewBox="0 0 15 15"><defs><linearGradient id="tg2" x1="0" x2="1"><stop offset="0" stop-color="#fff"/><stop offset="1" stop-color="#222"/></linearGradient></defs><rect x="0.5" y="0.5" width="13.5" height="14" fill="url(#tg2)" stroke="#1c1c1c"/></svg>
<svg class="b" style="left:49px;top:527px;" width="13" height="13" viewBox="0 0 13 13"><rect width="13" height="13" fill="#fff"/><path d="M0 13 L13 0" stroke="#e02a1c" stroke-width="3"/></svg>
<div class="b" style="left:6.5px;top:548.5px;width:58px;height:18px;border:1px solid #5f5f5f;box-sizing:border-box;"></div>
<div class="b" style="left:7px;top:549px;width:18px;height:17px;background:#3c3c3c;"></div>
<svg class="b" style="left:10px;top:551px;" width="14" height="14" viewBox="0 0 14 14"><g opacity="1"><circle cx="5.5" cy="5.5" r="4" fill="#8a8a8a" stroke="#cfcfcf" stroke-width="1"/><rect x="6" y="6" width="6.5" height="6.5" fill="#cfcfcf"/></g></svg>
<svg class="b" style="left:30px;top:551px;" width="14" height="14" viewBox="0 0 14 14"><g opacity="0.8"><circle cx="5.5" cy="5.5" r="4" fill="#8a8a8a" stroke="#cfcfcf" stroke-width="1"/><rect x="6" y="6" width="6.5" height="6.5" fill="#cfcfcf"/></g></svg>
<svg class="b" style="left:49px;top:551px;" width="14" height="14" viewBox="0 0 14 14"><g opacity="0.35"><circle cx="5.5" cy="5.5" r="4" fill="#8a8a8a" stroke="#cfcfcf" stroke-width="1"/><rect x="6" y="6" width="6.5" height="6.5" fill="#cfcfcf"/></g></svg>
<svg class="b" style="left:24px;top:574px;" width="24" height="18" viewBox="0 0 24 18"><rect x="9.5" y="1" width="13" height="10" fill="#7a7a7a" stroke="#cfcfcf" stroke-width="1.1"/><rect x="9.5" y="1" width="13" height="2.6" fill="#cfcfcf"/><rect x="1" y="6" width="13" height="10.5" fill="#6a6a6a" stroke="#cfcfcf" stroke-width="1.1"/><rect x="1" y="6" width="13" height="2.6" fill="#cfcfcf"/></svg>
<svg class="b" style="left:29px;top:613px;" width="15" height="5" viewBox="0 0 15 5"><circle cx="2" cy="2.5" r="1.6" fill="#cfcfcf"/><circle cx="7.2" cy="2.5" r="1.6" fill="#cfcfcf"/><circle cx="12.4" cy="2.5" r="1.6" fill="#cfcfcf"/></svg>
<div class="b" style="left:1316px;top:77.5px;width:348px;height:27.5px;background:#535353;"></div>
<div class="b" style="left:1316px;top:77.5px;width:348px;height:25.8px;background:#414141;"></div>
<div class="b" style="left:1316px;top:77.5px;width:61px;height:25.8px;background:#535353;"></div>
<span class="t" style="left:1331.0px;top:85.0px;font-size:9.5px;line-height:9.5px;color:#f0f0f0;font-weight:bold;letter-spacing:0.019px;">Couleur</span>
<div class="b" style="left:1377px;top:77.5px;width:106px;height:25.8px;background:#464646;"></div>
<div class="b" style="left:1482px;top:77.5px;width:1px;height:25.8px;background:#3a3a3a;"></div>
<span class="t" style="left:1386.0px;top:85.0px;font-size:9.5px;line-height:9.5px;color:#a0a0a0;font-weight:bold;letter-spacing:-0.068px;">Guide des couleurs</span>
<svg class="b" style="left:1321px;top:85.5px;" width="6" height="10" viewBox="0 0 6 10"><path d="M1 4 L3 1.5 L5 4 M1 6.5 L3 9 L5 6.5" fill="none" stroke="#a8a8a8" stroke-width="1"/></svg>
<svg class="b" style="left:1650px;top:86px;" width="11" height="9" viewBox="0 0 11 9"><path d="M0 1 H10.5 M0 4.5 H10.5 M0 8 H10.5" stroke="#c6c6c6" stroke-width="1.4"/></svg>
<div class="b" style="left:1316px;top:108.5px;width:348px;height:27.5px;background:#535353;"></div>
<div class="b" style="left:1316px;top:108.5px;width:348px;height:25.8px;background:#414141;"></div>
<div class="b" style="left:1316px;top:108.5px;width:61px;height:25.8px;background:#535353;"></div>
<span class="t" style="left:1325.0px;top:116.0px;font-size:9.5px;line-height:9.5px;color:#f0f0f0;font-weight:bold;letter-spacing:0.121px;">Nuancier</span>
<div class="b" style="left:1377px;top:108.5px;width:52px;height:25.8px;background:#464646;"></div>
<div class="b" style="left:1428px;top:108.5px;width:1px;height:25.8px;background:#3a3a3a;"></div>
<span class="t" style="left:1386.0px;top:116.0px;font-size:9.5px;line-height:9.5px;color:#a0a0a0;font-weight:bold;letter-spacing:-0.143px;">Formes</span>
<div class="b" style="left:1429px;top:108.5px;width:64.5px;height:25.8px;background:#464646;"></div>
<div class="b" style="left:1492.5px;top:108.5px;width:1px;height:25.8px;background:#3a3a3a;"></div>
<span class="t" style="left:1438.7px;top:116.0px;font-size:9.5px;line-height:9.5px;color:#a0a0a0;font-weight:bold;letter-spacing:-0.011px;">Symboles</span>
<svg class="b" style="left:1650px;top:117px;" width="11" height="9" viewBox="0 0 11 9"><path d="M0 1 H10.5 M0 4.5 H10.5 M0 8 H10.5" stroke="#c6c6c6" stroke-width="1.4"/></svg>
<div class="b" style="left:1316px;top:139.5px;width:348px;height:27.5px;background:#535353;"></div>
<div class="b" style="left:1316px;top:139.5px;width:348px;height:25.8px;background:#414141;"></div>
<div class="b" style="left:1316px;top:139.5px;width:62px;height:25.8px;background:#535353;"></div>
<span class="t" style="left:1331.0px;top:147.0px;font-size:9.5px;line-height:9.5px;color:#f0f0f0;font-weight:bold;letter-spacing:0.178px;">Contour</span>
<div class="b" style="left:1378px;top:139.5px;width:58.5px;height:25.8px;background:#464646;"></div>
<div class="b" style="left:1435.5px;top:139.5px;width:1px;height:25.8px;background:#3a3a3a;"></div>
<span class="t" style="left:1388.0px;top:147.0px;font-size:9.5px;line-height:9.5px;color:#a0a0a0;font-weight:bold;letter-spacing:0.098px;">Dégradé</span>
<div class="b" style="left:1436.5px;top:139.5px;width:80.5px;height:25.8px;background:#464646;"></div>
<div class="b" style="left:1516px;top:139.5px;width:1px;height:25.8px;background:#3a3a3a;"></div>
<span class="t" style="left:1446.0px;top:147.0px;font-size:9.5px;line-height:9.5px;color:#a0a0a0;font-weight:bold;letter-spacing:-0.016px;">Transparence</span>
<svg class="b" style="left:1321px;top:147.5px;" width="6" height="10" viewBox="0 0 6 10"><path d="M1 4 L3 1.5 L5 4 M1 6.5 L3 9 L5 6.5" fill="none" stroke="#a8a8a8" stroke-width="1"/></svg>
<svg class="b" style="left:1650px;top:148px;" width="11" height="9" viewBox="0 0 11 9"><path d="M0 1 H10.5 M0 4.5 H10.5 M0 8 H10.5" stroke="#c6c6c6" stroke-width="1.4"/></svg>
<div class="b" style="left:1316px;top:170.5px;width:348px;height:27.5px;background:#535353;"></div>
<div class="b" style="left:1316px;top:170.5px;width:348px;height:25.8px;background:#414141;"></div>
<div class="b" style="left:1316px;top:170.5px;width:48.5px;height:25.8px;background:#535353;"></div>
<span class="t" style="left:1325.0px;top:178.0px;font-size:9.5px;line-height:9.5px;color:#f0f0f0;font-weight:bold;letter-spacing:-0.136px;">Aspect</span>
<div class="b" style="left:1364.5px;top:170.5px;width:100.5px;height:25.8px;background:#464646;"></div>
<div class="b" style="left:1464px;top:170.5px;width:1px;height:25.8px;background:#3a3a3a;"></div>
<span class="t" style="left:1374.0px;top:178.0px;font-size:9.5px;line-height:9.5px;color:#a0a0a0;font-weight:bold;letter-spacing:-0.052px;">Styles graphiques</span>
<svg class="b" style="left:1650px;top:179px;" width="11" height="9" viewBox="0 0 11 9"><path d="M0 1 H10.5 M0 4.5 H10.5 M0 8 H10.5" stroke="#c6c6c6" stroke-width="1.4"/></svg>
<div class="b" style="left:1316px;top:201.5px;width:348px;height:27.5px;background:#535353;"></div>
<div class="b" style="left:1316px;top:201.5px;width:348px;height:25.8px;background:#414141;"></div>
<div class="b" style="left:1316px;top:201.5px;width:53.5px;height:25.8px;background:#535353;"></div>
<span class="t" style="left:1325.0px;top:209.0px;font-size:9.5px;line-height:9.5px;color:#f0f0f0;font-weight:bold;letter-spacing:-0.326px;">Calques</span>
<div class="b" style="left:1369.5px;top:201.5px;width:138.5px;height:25.8px;background:#464646;"></div>
<div class="b" style="left:1507px;top:201.5px;width:1px;height:25.8px;background:#3a3a3a;"></div>
<span class="t" style="left:1379.0px;top:209.0px;font-size:9.5px;line-height:9.5px;color:#a0a0a0;font-weight:bold;letter-spacing:-0.035px;">Exportation de ressources</span>
<div class="b" style="left:1508px;top:201.5px;width:89.5px;height:25.8px;background:#464646;"></div>
<div class="b" style="left:1596.5px;top:201.5px;width:1px;height:25.8px;background:#3a3a3a;"></div>
<span class="t" style="left:1518.0px;top:209.0px;font-size:9.5px;line-height:9.5px;color:#a0a0a0;font-weight:bold;letter-spacing:0.020px;">Plans de travail</span>
<svg class="b" style="left:1650px;top:210px;" width="11" height="9" viewBox="0 0 11 9"><path d="M0 1 H10.5 M0 4.5 H10.5 M0 8 H10.5" stroke="#c6c6c6" stroke-width="1.4"/></svg>
<div class="b" style="left:1316px;top:228px;width:348px;height:773px;background:#535353;"></div>
<div class="b" style="left:1327.5px;top:239px;width:304px;height:22px;background:#454545;border:1px solid #3a3a3a;box-sizing:border-box;border-radius:2px;"></div>
<svg class="b" style="left:1333px;top:244px;" width="13" height="13" viewBox="0 0 13 13"><circle cx="5" cy="5" r="3.6" fill="none" stroke="#d0d0d0" stroke-width="1.5"/><path d="M7.8 7.8 L11.5 11.5" stroke="#d0d0d0" stroke-width="1.8"/></svg>
<span class="t" style="left:1356.0px;top:244.0px;font-size:12px;line-height:12px;color:#5b5b5b;letter-spacing:0.225px;">Rechercher dans tout</span>
<svg class="b" style="left:1642px;top:243px;" width="14" height="15" viewBox="0 0 14 15"><path d="M0.5 0.8 H13.2 L8.3 7.2 V13.8 L5.4 11.6 V7.2 Z" fill="#d2d2d2"/></svg>
<div class="b" style="left:1321px;top:271px;width:340px;height:710px;border:1px solid #484848;box-sizing:border-box;"></div>
<div class="b" style="left:1321px;top:271.2px;width:339px;height:20.3px;background:#4f6386;"></div>
<div class="b" style="left:1321px;top:292px;width:339px;height:1px;background:#474747;"></div>
<div class="b" style="left:1321px;top:312.5px;width:339px;height:1px;background:#474747;"></div>
<svg class="b" style="left:1325.5px;top:277px;" width="13" height="9" viewBox="0 0 13 9"><path d="M0.5 4.5 Q6.5 -2.5 12.5 4.5 Q6.5 11.5 0.5 4.5 Z" fill="#cfcfcf"/><circle cx="6.5" cy="4.5" r="2.5" fill="#4a4a4a"/><circle cx="6.5" cy="4.5" r="1.1" fill="#cfcfcf"/></svg>
<div class="b" style="left:1364.5px;top:271.5px;width:3.5px;height:20px;background:#4a84f2;"></div>
<svg class="b" style="left:1325.5px;top:298px;" width="13" height="9" viewBox="0 0 13 9"><path d="M0.5 4.5 Q6.5 -2.5 12.5 4.5 Q6.5 11.5 0.5 4.5 Z" fill="#cfcfcf"/><circle cx="6.5" cy="4.5" r="2.5" fill="#4a4a4a"/><circle cx="6.5" cy="4.5" r="1.1" fill="#cfcfcf"/></svg>
<div class="b" style="left:1364.5px;top:292.5px;width:3.5px;height:20px;background:#4a84f2;"></div>
<div class="b" style="left:1343px;top:271.5px;width:1px;height:41px;background:#474747;"></div>
<div class="b" style="left:1363px;top:292.5px;width:1px;height:20px;background:#474747;"></div>
<svg class="b" style="left:1375px;top:277px;" width="11" height="9" viewBox="0 0 11 9"><path d="M1.5 2 L5.5 6 L9.5 2" fill="none" stroke="#e0e0e0" stroke-width="1.6"/></svg>
<svg class="b" style="left:1394px;top:272.5px;" width="18" height="18" viewBox="0 0 18 18"><rect x="0.5" y="0.5" width="17" height="17" fill="#fff" stroke="#000"/><path d="M2.5 6.5 L6 3.5 L12 5.5 L15.5 9 L15.5 12 L12 14.5 L5 11.5 L2.5 9.5 Z" fill="#577d92"/><path d="M5 8.5 L8.5 10 L9.5 8 L6.2 6.6 Z M9.5 8.5 L12 10.5 L12.8 8.2 L10.5 6.8 Z" fill="#1e1a1c"/><circle cx="5.3" cy="11.5" r="1.5" fill="#2c2430"/><circle cx="11.2" cy="14" r="1.5" fill="#2c2430"/></svg>
<span class="t" style="left:1417.0px;top:277.0px;font-size:10px;line-height:10px;color:#f0f0f0;letter-spacing:-0.227px;">Layer 1</span>
<svg class="b" style="left:1630px;top:276.5px;" width="10" height="10" viewBox="0 0 10 10"><circle cx="5" cy="5" r="3.6" fill="none" stroke="#e0e0e0" stroke-width="1.1"/></svg>
<svg class="b" style="left:1645px;top:277.5px;" width="9" height="9" viewBox="0 0 9 9"><rect x="0.8" y="0.8" width="6.6" height="6.6" fill="#4f8df7" stroke="#16233f" stroke-width="1"/></svg>
<svg class="b" style="left:1654.5px;top:271.5px;" width="6" height="6" viewBox="0 0 6 6"><path d="M0 0 H6 V6 Z" fill="#e6e6e6"/></svg>
<svg class="b" style="left:1397px;top:297px;" width="9" height="11" viewBox="0 0 9 11"><path d="M2.5 1.5 L6.5 5.5 L2.5 9.5" fill="none" stroke="#e0e0e0" stroke-width="1.6"/></svg>
<svg class="b" style="left:1417px;top:293.5px;" width="18" height="18" viewBox="0 0 18 18"><rect x="0.5" y="0.5" width="17" height="17" fill="#fff" stroke="#000"/><path d="M2.5 6.5 L6 3.5 L12 5.5 L15.5 9 L15.5 12 L12 14.5 L5 11.5 L2.5 9.5 Z" fill="#577d92"/><path d="M5 8.5 L8.5 10 L9.5 8 L6.2 6.6 Z M9.5 8.5 L12 10.5 L12.8 8.2 L10.5 6.8 Z" fill="#1e1a1c"/><circle cx="5.3" cy="11.5" r="1.5" fill="#2c2430"/><circle cx="11.2" cy="14" r="1.5" fill="#2c2430"/></svg>
<span class="t" style="left:1441.0px;top:298.0px;font-size:10px;line-height:10px;color:#f0f0f0;letter-spacing:-0.006px;">&lt;Groupe&gt;</span>
<svg class="b" style="left:1629px;top:296.5px;" width="12" height="12" viewBox="0 0 12 12"><circle cx="6" cy="6" r="5" fill="none" stroke="#e0e0e0" stroke-width="1"/><circle cx="6" cy="6" r="2.8" fill="none" stroke="#e0e0e0" stroke-width="1"/></svg>
<svg class="b" style="left:1645px;top:298.5px;" width="9" height="9" viewBox="0 0 9 9"><rect x="0.8" y="0.8" width="6.6" height="6.6" fill="#4f8df7" stroke="#16233f" stroke-width="1"/></svg>
<span class="t" style="left:1321.0px;top:986.0px;font-size:10px;line-height:10px;color:#dcdcdc;font-weight:bold;letter-spacing:-0.384px;">1 Calque</span>
<svg class="b" style="left:1472px;top:983px;" width="15" height="15" viewBox="0 0 15 15"><rect x="2.5" y="2.5" width="9" height="8" fill="none" stroke="#cfcfcf" stroke-width="1.1"/><path d="M0.5 2.5 H2.5 V0.5 M11.5 0.5 V2.5 H13.5 M0.5 10.5 H2.5 V12.5" fill="none" stroke="#cfcfcf" stroke-width="1"/><path d="M8 7 L14 11.5 L11 11.8 L9.6 14.5 Z" fill="#cfcfcf"/></svg>
<svg class="b" style="left:1496px;top:983px;" width="15" height="15" viewBox="0 0 15 15"><path d="M6 3 H1.5 V13.5 H12 V9" fill="none" stroke="#cfcfcf" stroke-width="1.2"/><path d="M8 1.5 H13.5 V7 M13.5 1.5 L7 8" fill="none" stroke="#cfcfcf" stroke-width="1.3"/></svg>
<svg class="b" style="left:1522px;top:983px;" width="14" height="14" viewBox="0 0 14 14"><circle cx="5.2" cy="5.2" r="3.8" fill="none" stroke="#cfcfcf" stroke-width="1.4"/><path d="M8 8 L12.5 12.5" stroke="#cfcfcf" stroke-width="1.8"/></svg>
<svg class="b" style="left:1548px;top:984px;" width="13" height="13" viewBox="0 0 13 13"><rect x="1" y="1" width="7.5" height="7.5" fill="none" stroke="#cfcfcf" stroke-width="1.1"/><rect x="4" y="4" width="7.5" height="7.5" fill="#cfcfcf" stroke="#535353" stroke-width="0.8"/></svg>
<svg class="b" style="left:1572px;top:984px;" width="17" height="13" viewBox="0 0 17 13"><path d="M1 1.5 V5.5 H5 M3.2 3.5 L5.2 5.5 L3.2 7.5" fill="none" stroke="#cfcfcf" stroke-width="1.1"/><rect x="7.5" y="2.5" width="8.5" height="8.5" fill="none" stroke="#cfcfcf" stroke-width="1.1"/><path d="M11.7 4.5 V9 M9.5 6.8 H14" stroke="#cfcfcf" stroke-width="1.2"/></svg>
<svg class="b" style="left:1601px;top:984px;" width="13" height="13" viewBox="0 0 13 13"><rect x="1" y="1" width="10.5" height="10.5" fill="none" stroke="#cfcfcf" stroke-width="1.2"/><path d="M6.2 3.5 V9 M3.5 6.2 H9" stroke="#cfcfcf" stroke-width="1.2"/></svg>
<svg class="b" style="left:1626px;top:983px;" width="13" height="14" viewBox="0 0 13 14"><path d="M1 3 H12 M4.5 3 V1.3 H8.5 V3 M2.5 3.5 L3.2 13 H9.8 L10.5 3.5" fill="none" stroke="#6a6a6a" stroke-width="1.2"/><path d="M5 5.5 V11 M8 5.5 V11" stroke="#6a6a6a" stroke-width="1"/></svg>
<div class="b" style="left:1316px;top:1004px;width:348px;height:25.5px;background:#414141;"></div>
<div class="b" style="left:1316px;top:1004px;width:85px;height:25.5px;background:#535353;"></div>
<span class="t" style="left:1325.0px;top:1012.0px;font-size:10px;line-height:10px;color:#f0f0f0;font-weight:bold;letter-spacing:-0.316px;">Commentaires</span>
<div class="b" style="left:1316px;top:1029.5px;width:348px;height:4.5px;background:#535353;"></div>
<div class="b" style="left:1669px;top:77.5px;width:251px;height:25.8px;background:#414141;"></div>
<div class="b" style="left:1669px;top:77.5px;width:66px;height:26.5px;background:#535353;"></div>
<div class="b" style="left:1735px;top:77.5px;width:83px;height:25.8px;background:#464646;"></div>
<div class="b" style="left:1817px;top:77.5px;width:1px;height:25.8px;background:#3a3a3a;"></div>
<span class="t" style="left:1678.0px;top:85.0px;font-size:9.5px;line-height:9.5px;color:#f2f2f2;font-weight:bold;">Propriétés</span>
<span class="t" style="left:1744.0px;top:85.0px;font-size:9.5px;line-height:9.5px;color:#a0a0a0;font-weight:bold;letter-spacing:0.016px;">Bibliothèques</span>
<span class="t" style="left:1678.5px;top:117.0px;font-size:10px;line-height:10px;color:#c6c6c6;letter-spacing:-0.172px;">Groupe</span>
<div class="b" style="left:1678px;top:137px;width:227px;height:1px;background:#4a4a4a;"></div>
<div class="b" style="left:1678px;top:291px;width:227px;height:1px;background:#4a4a4a;"></div>
<div class="b" style="left:1678px;top:462.5px;width:227px;height:1px;background:#4a4a4a;"></div>
<div class="b" style="left:1678px;top:546.5px;width:227px;height:1px;background:#4a4a4a;"></div>
<div class="b" style="left:1678px;top:622.5px;width:227px;height:1px;background:#4a4a4a;"></div>
<span class="t" style="left:1678.5px;top:151.0px;font-size:10px;line-height:10px;color:#c6c6c6;letter-spacing:-0.068px;">Transformation</span>
<svg class="b" style="left:1678.5px;top:181.5px;" width="20" height="20" viewBox="0 0 20 20"><rect x="1" y="1" width="4" height="4" fill="none" stroke="#cfcfcf" stroke-width="1"/><rect x="1" y="8" width="4" height="4" fill="none" stroke="#cfcfcf" stroke-width="1"/><rect x="1" y="15" width="4" height="4" fill="none" stroke="#cfcfcf" stroke-width="1"/><rect x="8" y="1" width="4" height="4" fill="none" stroke="#cfcfcf" stroke-width="1"/><rect x="8" y="8" width="4" height="4" fill="#e8e8e8" stroke="#cfcfcf" stroke-width="1"/><rect x="8" y="15" width="4" height="4" fill="none" stroke="#cfcfcf" stroke-width="1"/><rect x="15" y="1" width="4" height="4" fill="none" stroke="#cfcfcf" stroke-width="1"/><rect x="15" y="8" width="4" height="4" fill="none" stroke="#cfcfcf" stroke-width="1"/><rect x="15" y="15" width="4" height="4" fill="none" stroke="#cfcfcf" stroke-width="1"/><path d="M5 3 H8 M12 3 H15 M5 10 H8 M12 10 H15 M5 17 H8 M12 17 H15 M3 5 V8 M3 12 V15 M10 5 V8 M10 12 V15 M17 5 V8 M17 12 V15" stroke="#cfcfcf" stroke-width="1"/></svg>
<span class="t" style="left:1708.7px;top:175.0px;font-size:10px;line-height:10px;color:#c6c6c6;letter-spacing:0.236px;">X :</span>
<div class="b" style="left:1728px;top:169px;width:55px;height:19px;background:#454545;border:1px solid #3e3e3e;box-sizing:border-box;"></div>
<span class="t" style="left:1732.5px;top:174.0px;font-size:10px;line-height:10px;color:#ececec;letter-spacing:-0.534px;">412,0039 p:</span>
<span class="t" style="left:1708.7px;top:201.0px;font-size:10px;line-height:10px;color:#c6c6c6;letter-spacing:0.326px;">Y :</span>
<div class="b" style="left:1728px;top:195.2px;width:55px;height:19px;background:#454545;border:1px solid #3e3e3e;box-sizing:border-box;"></div>
<span class="t" style="left:1732.5px;top:200.0px;font-size:10px;line-height:10px;color:#ececec;letter-spacing:-0.534px;">437,8791 p:</span>
<span class="t" style="left:1797.7px;top:175.0px;font-size:10px;line-height:10px;color:#c6c6c6;letter-spacing:0.975px;">L :</span>
<div class="b" style="left:1818px;top:169px;width:55px;height:19px;background:#454545;border:1px solid #3e3e3e;box-sizing:border-box;"></div>
<span class="t" style="left:1822.5px;top:174.0px;font-size:10px;line-height:10px;color:#ececec;letter-spacing:-0.534px;">605,3718 p:</span>
<span class="t" style="left:1797.7px;top:201.0px;font-size:10px;line-height:10px;color:#c6c6c6;letter-spacing:0.159px;">H :</span>
<div class="b" style="left:1818px;top:195.2px;width:55px;height:19px;background:#454545;border:1px solid #3e3e3e;box-sizing:border-box;"></div>
<span class="t" style="left:1822.5px;top:200.0px;font-size:10px;line-height:10px;color:#ececec;letter-spacing:-0.534px;">456,0685 p:</span>
<svg class="b" style="left:1888px;top:183px;" width="17" height="18" viewBox="0 0 17 18"><path d="M5.5 8 V4.5 Q5.5 1.5 8.5 1.5 Q11.5 1.5 11.5 4.5 V6 M5.5 10.5 V13 Q5.5 16 8.5 16 Q11.5 16 11.5 13 V9.5 M8.5 5.5 V12" fill="none" stroke="#cfcfcf" stroke-width="1.5"/><path d="M2 2 L15.5 16.5" stroke="#cfcfcf" stroke-width="1.5"/></svg>
<svg class="b" style="left:1705px;top:222px;" width="15" height="12" viewBox="0 0 15 12"><path d="M1 10.5 H12 M1 10.5 L8.5 1.5" fill="none" stroke="#cfcfcf" stroke-width="1.2"/><path d="M6.5 10.5 Q6.5 7.5 4.6 6.2" fill="none" stroke="#cfcfcf" stroke-width="1"/><path d="M13.2 5.5 v1.4 M13.2 9 v1.4" stroke="#cfcfcf" stroke-width="1.2"/></svg>
<div class="b" style="left:1722px;top:221.5px;width:36px;height:19px;background:#454545;border:1px solid #3e3e3e;box-sizing:border-box;"></div>
<span class="t" style="left:1726.0px;top:227.0px;font-size:10px;line-height:10px;color:#ececec;">0°</span>
<div class="b" style="left:1758.5px;top:221.5px;width:18.5px;height:19px;background:#454545;border:1px solid #3e3e3e;box-sizing:border-box;"></div>
<svg class="b" style="left:1761.5px;top:226.3px;" width="12" height="10" viewBox="0 0 12 10"><path d="M2.9 3.2 l3.1 3.1 l3.1 -3.1" fill="none" stroke="#d8d8d8" stroke-width="1.5"/></svg>
<svg class="b" style="left:1818.5px;top:226px;" width="16" height="12" viewBox="0 0 16 12"><path d="M1 1 L6 6 L1 11 Z" fill="none" stroke="#cfcfcf" stroke-width="1"/><path d="M15 1 L10 6 L15 11 Z" fill="#cfcfcf"/><path d="M8 0 V12" stroke="#cfcfcf" stroke-width="1" stroke-dasharray="1.5 1.2"/></svg>
<svg class="b" style="left:1844px;top:224px;" width="12" height="16" viewBox="0 0 12 16"><path d="M1 1 L6 6 L11 1 Z" fill="#cfcfcf"/><path d="M1 15 L6 10 L11 15 Z" fill="none" stroke="#cfcfcf" stroke-width="1"/><path d="M0 8 H12" stroke="#cfcfcf" stroke-width="1" stroke-dasharray="1.5 1.2"/></svg>
<div class="b" style="left:1723px;top:252px;width:150px;height:20.5px;border:1px solid #6e6e6e;border-radius:2px;box-sizing:border-box;"></div>
<span class="t" style="left:1764.0px;top:259.0px;font-size:10px;line-height:10px;color:#f0f0f0;letter-spacing:-0.041px;text-shadow:0 0 0.4px #f0f0f0;">Rotation générative</span>
<svg class="b" style="left:1747px;top:255px;" width="14" height="14" viewBox="0 0 18 18"><path d="M11.5 1 L13 6 L17.5 7.5 L13 9 L11.5 14 L10 9 L5.5 7.5 L10 6 Z" fill="#d8d8d8"/><path d="M4 10.5 L5 13.3 L7.6 14.2 L5 15.1 L4 17.8 L3 15.1 L0.4 14.2 L3 13.3 Z" fill="#d8d8d8"/></svg>
<svg class="b" style="left:1886.5px;top:278.5px;" width="14" height="5" viewBox="0 0 14 5"><circle cx="2" cy="2.5" r="1.5" fill="#d0d0d0"/><circle cx="7" cy="2.5" r="1.5" fill="#d0d0d0"/><circle cx="12" cy="2.5" r="1.5" fill="#d0d0d0"/></svg>
<span class="t" style="left:1678.5px;top:306.0px;font-size:10px;line-height:10px;color:#c6c6c6;letter-spacing:-0.075px;">Aspect</span>
<div class="b" style="left:1679px;top:329px;width:18px;height:18px;background:#4a4a4a;border:1px solid #8c8c8c;box-sizing:border-box;"></div>
<span class="t" style="left:1685.0px;top:333.0px;font-size:11px;line-height:11px;color:#e6e6e6;font-weight:bold;">?</span>
<span class="t" style="left:1709.0px;top:334.0px;font-size:10px;line-height:10px;color:#c6c6c6;letter-spacing:-0.599px;">Fond</span>
<svg class="b" style="left:1679px;top:357.5px;" width="18" height="18" viewBox="0 0 18 18"><rect width="18" height="18" fill="#f4f4f4"/><rect x="4.5" y="4.5" width="9" height="9" fill="#2a2a2a"/><rect x="7" y="7" width="4" height="4" fill="#f4f4f4"/><path d="M0.5 17.5 L17.5 0.5" stroke="#e0201a" stroke-width="2.2"/><rect x="0.5" y="0.5" width="17" height="17" fill="none" stroke="#c22"/></svg>
<span class="t" style="left:1709.0px;top:362.0px;font-size:10px;line-height:10px;color:#ececec;letter-spacing:-0.097px;text-shadow:0 0 0.4px #ececec;">Contour</span>
<div class="b" style="left:1709px;top:373.5px;width:35px;height:1px;border-bottom:1px dotted #bdbdbd;"></div>
<svg class="b" style="left:1760.5px;top:356px;" width="17" height="19.5" viewBox="0 0 17 19.5"><rect width="17" height="19.5" fill="#454545"/><path d="M5.5 7.5 l3 -3 l3 3 M5.5 12 l3 3 l3 -3" fill="none" stroke="#d8d8d8" stroke-width="1.5"/></svg>
<div class="b" style="left:1778px;top:356px;width:32px;height:19.5px;background:#454545;"></div>
<div class="b" style="left:1811px;top:356px;width:18.5px;height:19.5px;background:#454545;"></div>
<svg class="b" style="left:1814px;top:361px;" width="12" height="10" viewBox="0 0 12 10"><path d="M2.9 3.2 l3.1 3.1 l3.1 -3.1" fill="none" stroke="#d8d8d8" stroke-width="1.5"/></svg>
<div class="b" style="left:1760.5px;top:356px;width:69px;height:19.5px;border:1px solid #3e3e3e;box-sizing:border-box;"></div>
<svg class="b" style="left:1679px;top:386.5px;" width="17" height="17" viewBox="0 0 17 17"><rect x="1" y="1" width="3" height="3" fill="#5a5a5a"/><rect x="1" y="4" width="3" height="3" fill="#6e6e6e"/><rect x="1" y="7" width="3" height="3" fill="#5a5a5a"/><rect x="1" y="10" width="3" height="3" fill="#6e6e6e"/><rect x="1" y="13" width="3" height="3" fill="#5a5a5a"/><rect x="4" y="1" width="3" height="3" fill="#6e6e6e"/><rect x="4" y="4" width="3" height="3" fill="#5a5a5a"/><rect x="4" y="7" width="3" height="3" fill="#6e6e6e"/><rect x="4" y="10" width="3" height="3" fill="#5a5a5a"/><rect x="4" y="13" width="3" height="3" fill="#6e6e6e"/><rect x="7" y="1" width="3" height="3" fill="#5a5a5a"/><rect x="7" y="4" width="3" height="3" fill="#6e6e6e"/><rect x="7" y="7" width="3" height="3" fill="#5a5a5a"/><rect x="7" y="10" width="3" height="3" fill="#6e6e6e"/><rect x="7" y="13" width="3" height="3" fill="#5a5a5a"/><rect x="10" y="1" width="3" height="3" fill="#6e6e6e"/><rect x="10" y="4" width="3" height="3" fill="#5a5a5a"/><rect x="10" y="7" width="3" height="3" fill="#6e6e6e"/><rect x="10" y="10" width="3" height="3" fill="#5a5a5a"/><rect x="10" y="13" width="3" height="3" fill="#6e6e6e"/><rect x="13" y="1" width="3" height="3" fill="#5a5a5a"/><rect x="13" y="4" width="3" height="3" fill="#6e6e6e"/><rect x="13" y="7" width="3" height="3" fill="#5a5a5a"/><rect x="13" y="10" width="3" height="3" fill="#6e6e6e"/><rect x="13" y="13" width="3" height="3" fill="#5a5a5a"/><rect x="0.5" y="0.5" width="16" height="16" fill="none" stroke="#7a7a7a"/></svg>
<span class="t" style="left:1709.0px;top:391.0px;font-size:10px;line-height:10px;color:#ececec;letter-spacing:-0.245px;text-shadow:0 0 0.4px #ececec;">Opacité</span>
<div class="b" style="left:1709px;top:402.5px;width:33px;height:1px;border-bottom:1px dotted #bdbdbd;"></div>
<div class="b" style="left:1760.5px;top:385.5px;width:49.5px;height:19.5px;background:#454545;"></div>
<span class="t" style="left:1764.5px;top:391.0px;font-size:10px;line-height:10px;color:#ececec;letter-spacing:-0.527px;">100%</span>
<div class="b" style="left:1811px;top:385.5px;width:18.5px;height:19.5px;background:#454545;"></div>
<svg class="b" style="left:1815.5px;top:389.2px;" width="10" height="12" viewBox="0 0 10 12"><path d="M3.2 2.5 l3.5 3.5 l-3.5 3.5" fill="none" stroke="#d8d8d8" stroke-width="1.6"/></svg>
<div class="b" style="left:1760.5px;top:385.5px;width:69px;height:19.5px;border:1px solid #3e3e3e;box-sizing:border-box;"></div>
<span class="t" style="left:1675.5px;top:423.0px;font-size:13px;line-height:13px;color:#d0d0d0;font-style:italic;">fx</span>
<div class="b" style="left:1688px;top:433px;width:1.6px;height:1.6px;background:#d0d0d0;"></div>
<svg class="b" style="left:1881.5px;top:450.5px;" width="14" height="5" viewBox="0 0 14 5"><circle cx="2" cy="2.5" r="1.5" fill="#d0d0d0"/><circle cx="7" cy="2.5" r="1.5" fill="#d0d0d0"/><circle cx="12" cy="2.5" r="1.5" fill="#d0d0d0"/></svg>
<span class="t" style="left:1679.0px;top:478.0px;font-size:10px;line-height:10px;color:#c6c6c6;letter-spacing:-0.060px;">Alignement</span>
<svg class="b" style="left:1683px;top:502px;" width="25" height="18" viewBox="0 0 25 18"><path d="M5 1 V5 M1 5 H5" stroke="#c8c8c8" stroke-width="1.2" fill="none"/><path d="M5.5 5.5 H12.5 L16.5 9.5 V16.5 H5.5 Z" fill="#7a7a7a" stroke="#c8c8c8" stroke-width="1.2"/><path d="M12.5 5.5 V9.5 H16.5" fill="none" stroke="#c8c8c8" stroke-width="1"/><path d="M19 10 l2.2 2.2 l2.2 -2.2" fill="none" stroke="#c8c8c8" stroke-width="1.2"/></svg>
<svg class="b" style="left:1719.5px;top:502.5px;" width="16" height="18" viewBox="0 0 16 18"><path d="M1 0 V18" stroke="#c8c8c8" stroke-width="1.2"/><rect x="3" y="3" width="7.5" height="5" fill="#c8c8c8"/><rect x="3" y="10.5" width="12" height="5" fill="#c8c8c8"/></svg>
<svg class="b" style="left:1750px;top:502.5px;" width="15" height="18" viewBox="0 0 15 18"><path d="M7.5 0 V18" stroke="#c8c8c8" stroke-width="1.2"/><rect x="3" y="3" width="9" height="5" fill="#c8c8c8"/><rect x="0.5" y="10.5" width="14" height="5" fill="#c8c8c8"/></svg>
<svg class="b" style="left:1780px;top:502.5px;" width="17" height="18" viewBox="0 0 17 18"><path d="M16 0 V18" stroke="#c8c8c8" stroke-width="1.2"/><rect x="6.5" y="3" width="7.5" height="5" fill="#c8c8c8"/><rect x="1" y="10.5" width="13" height="5" fill="#c8c8c8"/></svg>
<svg class="b" style="left:1809.5px;top:502.5px;" width="18" height="18" viewBox="0 0 18 18"><path d="M0 2 H18" stroke="#c8c8c8" stroke-width="1.2"/><rect x="3" y="4" width="5" height="12" fill="#c8c8c8"/><rect x="10.5" y="4" width="5" height="7.5" fill="#c8c8c8"/></svg>
<svg class="b" style="left:1839.5px;top:502.5px;" width="18" height="18" viewBox="0 0 18 18"><path d="M0 9 H18" stroke="#c8c8c8" stroke-width="1.2"/><rect x="3" y="2.5" width="5" height="13" fill="#c8c8c8"/><rect x="10.5" y="5" width="5" height="8" fill="#c8c8c8"/></svg>
<svg class="b" style="left:1869px;top:502.5px;" width="18" height="18" viewBox="0 0 18 18"><path d="M0 17 H18" stroke="#c8c8c8" stroke-width="1.2"/><rect x="3" y="2.5" width="5" height="12.5" fill="#c8c8c8"/><rect x="10.5" y="7" width="5" height="8" fill="#c8c8c8"/></svg>
<svg class="b" style="left:1886.5px;top:535.5px;" width="14" height="5" viewBox="0 0 14 5"><circle cx="2" cy="2.5" r="1.5" fill="#d0d0d0"/><circle cx="7" cy="2.5" r="1.5" fill="#d0d0d0"/><circle cx="12" cy="2.5" r="1.5" fill="#d0d0d0"/></svg>
<span class="t" style="left:1679.0px;top:562.0px;font-size:10px;line-height:10px;color:#c6c6c6;letter-spacing:-0.099px;">Pathfinder</span>
<svg class="b" style="left:1684px;top:587.5px;" width="17" height="17" viewBox="0 0 17 17"><rect x="1" y="1" width="10" height="10" fill="#cfcfcf"/><rect x="5.5" y="5.5" width="10" height="10" fill="#cfcfcf"/></svg>
<svg class="b" style="left:1714.5px;top:587.5px;" width="17" height="17" viewBox="0 0 17 17"><rect x="1" y="1" width="10" height="10" fill="#cfcfcf"/><rect x="5.5" y="5.5" width="10" height="10" fill="#535353" stroke="#cfcfcf" stroke-width="1.2"/></svg>
<svg class="b" style="left:1745.5px;top:587.5px;" width="17" height="17" viewBox="0 0 17 17"><rect x="1" y="1" width="10" height="10" fill="none" stroke="#cfcfcf" stroke-width="1.2"/><rect x="5.5" y="5.5" width="10" height="10" fill="none" stroke="#cfcfcf" stroke-width="1.2"/><rect x="5.5" y="5.5" width="5.5" height="5.5" fill="#cfcfcf"/></svg>
<svg class="b" style="left:1777px;top:587.5px;" width="17" height="17" viewBox="0 0 17 17"><rect x="1" y="1" width="10" height="10" fill="#cfcfcf"/><rect x="5.5" y="5.5" width="10" height="10" fill="#cfcfcf"/><rect x="6.5" y="6.5" width="3.6" height="3.6" fill="#535353"/></svg>
<div class="b" style="left:1810px;top:580px;width:94px;height:19px;background:#5b5b5b;border-radius:2px;"></div>
<span class="t" style="left:1830.0px;top:585.0px;font-size:10px;line-height:10px;color:#727272;letter-spacing:-0.188px;">Décomposer</span>
<svg class="b" style="left:1886.5px;top:608.5px;" width="14" height="5" viewBox="0 0 14 5"><circle cx="2" cy="2.5" r="1.5" fill="#d0d0d0"/><circle cx="7" cy="2.5" r="1.5" fill="#d0d0d0"/><circle cx="12" cy="2.5" r="1.5" fill="#d0d0d0"/></svg>
<span class="t" style="left:1679.0px;top:642.0px;font-size:10px;line-height:10px;color:#c6c6c6;letter-spacing:-0.107px;">Sélections rap...</span>
<div class="b" style="left:1679px;top:663.5px;width:103px;height:20.5px;border:1px solid #6e6e6e;border-radius:2px;box-sizing:border-box;"></div>
<span class="t" style="left:1711.0px;top:670.0px;font-size:10px;line-height:10px;color:#f0f0f0;letter-spacing:-0.215px;text-shadow:0 0 0.4px #f0f0f0;">Dissocier</span>
<div class="b" style="left:1792px;top:663.5px;width:114px;height:20.5px;border:1px solid #6e6e6e;border-radius:2px;box-sizing:border-box;"></div>
<span class="t" style="left:1814.0px;top:670.0px;font-size:10px;line-height:10px;color:#f0f0f0;letter-spacing:0.070px;text-shadow:0 0 0.4px #f0f0f0;">Isoler le groupe</span>
<div class="b" style="left:1679px;top:694.5px;width:227px;height:20.5px;border:1px solid #6e6e6e;border-radius:2px;box-sizing:border-box;"></div>
<span class="t" style="left:1721.8px;top:701.0px;font-size:10px;line-height:10px;color:#f0f0f0;text-shadow:0 0 0.4px #f0f0f0;">Enregistrer en tant que symbole</span>
<div class="b" style="left:1679px;top:725.5px;width:227px;height:20.5px;border:1px solid #6e6e6e;border-radius:2px;box-sizing:border-box;"></div>
<span class="t" style="left:1747.4px;top:732.0px;font-size:10px;line-height:10px;color:#f0f0f0;letter-spacing:-0.031px;text-shadow:0 0 0.4px #f0f0f0;">Variations de couleur</span>
<div class="b" style="left:1679px;top:756.5px;width:227px;height:20.5px;border:1px solid #6e6e6e;border-radius:2px;box-sizing:border-box;"></div>
<span class="t" style="left:1768.7px;top:763.0px;font-size:10px;line-height:10px;color:#f0f0f0;letter-spacing:-0.062px;text-shadow:0 0 0.4px #f0f0f0;">Disposition</span>
<div class="b" style="left:1679px;top:787.5px;width:205px;height:20.5px;border:1px solid #6e6e6e;border-radius:2px;box-sizing:border-box;"></div>
<span class="t" style="left:1722.7px;top:794.0px;font-size:10px;line-height:10px;color:#f0f0f0;letter-spacing:-0.022px;text-shadow:0 0 0.4px #f0f0f0;">Démarrer la modif. globale</span>
<div class="b" style="left:1884.5px;top:787.5px;width:21.5px;height:20.5px;border:1px solid #6e6e6e;border-radius:2px;box-sizing:border-box;"></div>
<svg class="b" style="left:1889px;top:793px;" width="12" height="10" viewBox="0 0 12 10"><path d="M3 3.2 l3 3 l3 -3" fill="none" stroke="#d8d8d8" stroke-width="1.3"/></svg>
<div class="b" style="left:1679px;top:818.5px;width:227px;height:20.5px;border:1px solid #6e6e6e;border-radius:2px;box-sizing:border-box;"></div>
<span class="t" style="left:1717.5px;top:825.0px;font-size:10px;line-height:10px;color:#f0f0f0;letter-spacing:0.650px;text-shadow:0 0 0.4px #f0f0f0;">Remplissage et outil de forme</span>
<div class="b" style="left:1679px;top:849.5px;width:227px;height:20.5px;border:1px solid #6e6e6e;border-radius:2px;box-sizing:border-box;"></div>
<svg class="b" style="left:300px;top:300px;" width="800" height="600" viewBox="300 300 800 600"><path d="M499 332 L512 332.5 L531 337 L565 350.5 L598 365 L653 391 L720 423.5 L772 452.5 L815 481 L858 512 L891 544 L930 563 L985 599 L1020 619 L1036 628 L1046 642 L1052 667 L1050 686 L1044 706 L1030 732 L1008 764 L994 778 L965 803 L934 828 L908 850 L886 853 L863 849 L858 820 L752 800 L700 778 L664 762 L588 723 L512 679 L394 621 L388 623 L347 596 L336 579 L331 564 L331 546 L338 537 L346 528 L346 503 L351.5 494 L367 469 L391 443 L406 426 L453 376 L487 342 Z" fill="#60a0be" /><path d="M350 520 L372 503 L380 511 L460 552 L476 546 L512 506 L540 520 L514 538 L506 557 L512 580 L512 600 L500 640 L394 621 L388 623 L347 596 L336 579 L331 564 L331 546 L346 528 L346 503 Z" fill="#5896b6" /><path d="M512 580 L540 600 L609 634 L678 670 L712 692 L726 670 L763 690 L790 740 L800 765 L752 800 L700 778 L664 762 L588 723 L512 679 L500 640 Z" fill="#5896b6" /><path d="M512 627 L582 660 L594 668 L720 719 L760 745 L752 800 L700 778 L664 762 L588 723 L512 679 L505 650 Z" fill="#4f8aa8" /><path d="M512 626 L582 659" fill="none" stroke="#6eacc9" stroke-width="2.2" stroke-linejoin="round" stroke-linecap="round" /><path d="M594 667 L720 718 L756 742" fill="none" stroke="#6eacc9" stroke-width="2.2" stroke-linejoin="round" stroke-linecap="round" /><path d="M514 664 L588 707 L664 747 L700 763 L752 786 L752 800 L700 778 L664 762 L588 723 L512 679 Z" fill="#457d9a" /><path d="M331 546 L340 552 L392 590 L398 606 L394 621 L388 623 L347 596 L336 579 L331 564 Z" fill="#4f8aa8" /><path d="M333 568 L345 580 L390 612 L394 621 L388 623 L347 596 L336 579 Z" fill="#457d9a" /><path d="M391 596 Q394 574 414 569 Q452 564 484 594 Q508 622 514 664" fill="none" stroke="#68a6c4" stroke-width="6" stroke-linecap="round"/><path d="M763 690 L772 689 L800 700 L860 740 L916 769 L870 775 L860 800 L858 820 L800 765 L790 740 Z" fill="#5896b6" /><path d="M744 768 Q750 747 772 745 Q806 742 848 758 Q870 767 888 772" fill="none" stroke="#67a7c5" stroke-width="12" stroke-linecap="round"/><path d="M1037 628 L1043 642 L1048 661 L1052 668.5 L1049 688 L1044 704 L1030 732 L1004 765 L993 774 L965 803 L934 828 L908 850 L886 853 L863 849 L858 820 L870 775 L911 767 L924 759 L946 748 L970 728 L989 707 L1011 678 L1030 646 Z" fill="#5896b6" /><path d="M1037 629 L1041 640 L1042.6 655.6 L1040 672 L1037 687 L1026 705.6 L1004 729.6 L978 753.7 L955.6 777.8 L940 784 L905 782 L880 778 L870 775 L911 767 L924 759 L946 748 L970 728 L989 707 L1011 678 L1030 646 Z" fill="#ececea" /><path d="M1047 696 L1040 716 L1030 732 L1004 765 L993 774 L965 803 L934 828 L908 850 L886 853 L863 849 L861 838 L905 838 L960 792 L1000 752 L1030 714 Z" fill="#4f8aa8" /><path d="M862 843 L905 843 L962 797 L1004 755 L1034 717" fill="none" stroke="#3f7491" stroke-width="2.2" stroke-linejoin="round" stroke-linecap="round" /><ellipse cx="1029.6" cy="676" rx="4.6" ry="10.5" fill="#f1ebc6" stroke="#4a86f5" stroke-width="1.4" transform="rotate(12 1029.6 676)"/><ellipse cx="942.5" cy="767" rx="5" ry="8" fill="#f1ebc6" stroke="#4a86f5" stroke-width="1.4" transform="rotate(50 942.5 767)"/><path d="M394 621 L395 604 L399 594 L410 588 L440 588 L462 598 L484 618 L500 645 L508 676.6 L506 684 L499 690 L470 700 L400 640 Z" fill="#0f1a28" /><path d="M750 800 L752 768 L757 761 L765 757.5 L797 759.5 L825 765 L848 771 L856 800 L860 836 L863 849 L850 862 L800 850 Z" fill="#0f1a28" /><g transform="translate(445 654) rotate(42)"><ellipse rx="59.5" ry="41" fill="#2b2431" stroke="#4a86f5" stroke-width="1.4"/><ellipse rx="55.5" ry="37.5" fill="none" stroke="#8f92c8" stroke-width="1.1"/><ellipse rx="52" ry="34.5" fill="none" stroke="#4a4868" stroke-width="0.8"/><ellipse rx="42.5" ry="28" fill="#c7d2ef" stroke="#4a86f5" stroke-width="1.6"/><ellipse cx="29.4" cy="3.8" rx="3.6" ry="2.4" fill="#131828" transform="rotate(101 29.4 3.8)"/><ellipse cx="22.5" cy="12.6" rx="3.6" ry="2.4" fill="#131828" transform="rotate(131 22.5 12.6)"/><ellipse cx="9.5" cy="18.0" rx="3.6" ry="2.4" fill="#131828" transform="rotate(161 9.5 18.0)"/><ellipse cx="-6.0" cy="18.6" rx="3.6" ry="2.4" fill="#131828" transform="rotate(191 -6.0 18.6)"/><ellipse cx="-19.9" cy="14.2" rx="3.6" ry="2.4" fill="#131828" transform="rotate(221 -19.9 14.2)"/><ellipse cx="-28.4" cy="6.0" rx="3.6" ry="2.4" fill="#131828" transform="rotate(251 -28.4 6.0)"/><ellipse cx="-29.4" cy="-3.8" rx="3.6" ry="2.4" fill="#131828" transform="rotate(281 -29.4 -3.8)"/><ellipse cx="-22.5" cy="-12.6" rx="3.6" ry="2.4" fill="#131828" transform="rotate(311 -22.5 -12.6)"/><ellipse cx="-9.5" cy="-18.0" rx="3.6" ry="2.4" fill="#131828" transform="rotate(341 -9.5 -18.0)"/><ellipse cx="6.0" cy="-18.6" rx="3.6" ry="2.4" fill="#131828" transform="rotate(371 6.0 -18.6)"/><ellipse cx="19.9" cy="-14.2" rx="3.6" ry="2.4" fill="#131828" transform="rotate(401 19.9 -14.2)"/><ellipse cx="28.4" cy="-6.0" rx="3.6" ry="2.4" fill="#131828" transform="rotate(431 28.4 -6.0)"/><rect x="35.8" y="-0.4" width="4.2" height="4.2" fill="#4a86f5"/><rect x="20.0" y="-0.9" width="3.8" height="3.8" fill="#4a86f5"/><rect x="32.6" y="7.9" width="4.2" height="4.2" fill="#4a86f5"/><rect x="18.2" y="3.8" width="3.8" height="3.8" fill="#4a86f5"/><rect x="25.2" y="14.9" width="4.2" height="4.2" fill="#4a86f5"/><rect x="13.9" y="7.8" width="3.8" height="3.8" fill="#4a86f5"/><rect x="14.6" y="19.9" width="4.2" height="4.2" fill="#4a86f5"/><rect x="7.7" y="10.7" width="3.8" height="3.8" fill="#4a86f5"/><rect x="1.9" y="22.3" width="4.2" height="4.2" fill="#4a86f5"/><rect x="0.4" y="12.0" width="3.8" height="3.8" fill="#4a86f5"/><rect x="-11.3" y="21.7" width="4.2" height="4.2" fill="#4a86f5"/><rect x="-7.2" y="11.7" width="3.8" height="3.8" fill="#4a86f5"/><rect x="-23.4" y="18.2" width="4.2" height="4.2" fill="#4a86f5"/><rect x="-14.2" y="9.7" width="3.8" height="3.8" fill="#4a86f5"/><rect x="-32.8" y="12.3" width="4.2" height="4.2" fill="#4a86f5"/><rect x="-19.7" y="6.3" width="3.8" height="3.8" fill="#4a86f5"/><rect x="-38.6" y="4.6" width="4.2" height="4.2" fill="#4a86f5"/><rect x="-23.0" y="2.0" width="3.8" height="3.8" fill="#4a86f5"/><rect x="-40.0" y="-3.8" width="4.2" height="4.2" fill="#4a86f5"/><rect x="-23.8" y="-2.9" width="3.8" height="3.8" fill="#4a86f5"/><rect x="-36.8" y="-12.1" width="4.2" height="4.2" fill="#4a86f5"/><rect x="-22.0" y="-7.6" width="3.8" height="3.8" fill="#4a86f5"/><rect x="-29.4" y="-19.1" width="4.2" height="4.2" fill="#4a86f5"/><rect x="-17.7" y="-11.6" width="3.8" height="3.8" fill="#4a86f5"/><rect x="-18.8" y="-24.1" width="4.2" height="4.2" fill="#4a86f5"/><rect x="-11.5" y="-14.5" width="3.8" height="3.8" fill="#4a86f5"/><rect x="-6.1" y="-26.5" width="4.2" height="4.2" fill="#4a86f5"/><rect x="-4.2" y="-15.8" width="3.8" height="3.8" fill="#4a86f5"/><rect x="7.1" y="-25.9" width="4.2" height="4.2" fill="#4a86f5"/><rect x="3.4" y="-15.5" width="3.8" height="3.8" fill="#4a86f5"/><rect x="19.2" y="-22.4" width="4.2" height="4.2" fill="#4a86f5"/><rect x="10.4" y="-13.5" width="3.8" height="3.8" fill="#4a86f5"/><rect x="28.6" y="-16.5" width="4.2" height="4.2" fill="#4a86f5"/><rect x="15.9" y="-10.1" width="3.8" height="3.8" fill="#4a86f5"/><rect x="34.4" y="-8.8" width="4.2" height="4.2" fill="#4a86f5"/><rect x="19.2" y="-5.8" width="3.8" height="3.8" fill="#4a86f5"/><rect x="25.6" y="6.5" width="4.4" height="4.4" fill="#4a86f5"/><rect x="15.0" y="14.0" width="4.4" height="4.4" fill="#4a86f5"/><rect x="-0.2" y="17.3" width="4.4" height="4.4" fill="#4a86f5"/><rect x="-16.0" y="15.3" width="4.4" height="4.4" fill="#4a86f5"/><rect x="-28.0" y="8.6" width="4.4" height="4.4" fill="#4a86f5"/><rect x="-33.1" y="-1.0" width="4.4" height="4.4" fill="#4a86f5"/><rect x="-30.0" y="-10.9" width="4.4" height="4.4" fill="#4a86f5"/><rect x="-19.4" y="-18.4" width="4.4" height="4.4" fill="#4a86f5"/><rect x="-4.2" y="-21.7" width="4.4" height="4.4" fill="#4a86f5"/><rect x="11.6" y="-19.7" width="4.4" height="4.4" fill="#4a86f5"/><rect x="23.6" y="-13.0" width="4.4" height="4.4" fill="#4a86f5"/><rect x="28.7" y="-3.4" width="4.4" height="4.4" fill="#4a86f5"/><ellipse rx="38" ry="24.5" fill="none" stroke="#4a86f5" stroke-width="1.2"/><ellipse rx="15" ry="10" fill="#dde3f5" stroke="#4a86f5" stroke-width="1.2"/><ellipse rx="10.5" ry="7" fill="none" stroke="#151a2c" stroke-width="2.6"/><ellipse rx="4" ry="2.6" fill="#4a86f5"/></g><g transform="translate(799 823) rotate(42)"><ellipse rx="59.5" ry="41" fill="#2b2431" stroke="#4a86f5" stroke-width="1.4"/><ellipse rx="55.5" ry="37.5" fill="none" stroke="#8f92c8" stroke-width="1.1"/><ellipse rx="52" ry="34.5" fill="none" stroke="#4a4868" stroke-width="0.8"/><ellipse rx="42.5" ry="28" fill="#c7d2ef" stroke="#4a86f5" stroke-width="1.6"/><ellipse cx="29.4" cy="3.8" rx="3.6" ry="2.4" fill="#131828" transform="rotate(101 29.4 3.8)"/><ellipse cx="22.5" cy="12.6" rx="3.6" ry="2.4" fill="#131828" transform="rotate(131 22.5 12.6)"/><ellipse cx="9.5" cy="18.0" rx="3.6" ry="2.4" fill="#131828" transform="rotate(161 9.5 18.0)"/><ellipse cx="-6.0" cy="18.6" rx="3.6" ry="2.4" fill="#131828" transform="rotate(191 -6.0 18.6)"/><ellipse cx="-19.9" cy="14.2" rx="3.6" ry="2.4" fill="#131828" transform="rotate(221 -19.9 14.2)"/><ellipse cx="-28.4" cy="6.0" rx="3.6" ry="2.4" fill="#131828" transform="rotate(251 -28.4 6.0)"/><ellipse cx="-29.4" cy="-3.8" rx="3.6" ry="2.4" fill="#131828" transform="rotate(281 -29.4 -3.8)"/><ellipse cx="-22.5" cy="-12.6" rx="3.6" ry="2.4" fill="#131828" transform="rotate(311 -22.5 -12.6)"/><ellipse cx="-9.5" cy="-18.0" rx="3.6" ry="2.4" fill="#131828" transform="rotate(341 -9.5 -18.0)"/><ellipse cx="6.0" cy="-18.6" rx="3.6" ry="2.4" fill="#131828" transform="rotate(371 6.0 -18.6)"/><ellipse cx="19.9" cy="-14.2" rx="3.6" ry="2.4" fill="#131828" transform="rotate(401 19.9 -14.2)"/><ellipse cx="28.4" cy="-6.0" rx="3.6" ry="2.4" fill="#131828" transform="rotate(431 28.4 -6.0)"/><rect x="35.8" y="-0.4" width="4.2" height="4.2" fill="#4a86f5"/><rect x="20.0" y="-0.9" width="3.8" height="3.8" fill="#4a86f5"/><rect x="32.6" y="7.9" width="4.2" height="4.2" fill="#4a86f5"/><rect x="18.2" y="3.8" width="3.8" height="3.8" fill="#4a86f5"/><rect x="25.2" y="14.9" width="4.2" height="4.2" fill="#4a86f5"/><rect x="13.9" y="7.8" width="3.8" height="3.8" fill="#4a86f5"/><rect x="14.6" y="19.9" width="4.2" height="4.2" fill="#4a86f5"/><rect x="7.7" y="10.7" width="3.8" height="3.8" fill="#4a86f5"/><rect x="1.9" y="22.3" width="4.2" height="4.2" fill="#4a86f5"/><rect x="0.4" y="12.0" width="3.8" height="3.8" fill="#4a86f5"/><rect x="-11.3" y="21.7" width="4.2" height="4.2" fill="#4a86f5"/><rect x="-7.2" y="11.7" width="3.8" height="3.8" fill="#4a86f5"/><rect x="-23.4" y="18.2" width="4.2" height="4.2" fill="#4a86f5"/><rect x="-14.2" y="9.7" width="3.8" height="3.8" fill="#4a86f5"/><rect x="-32.8" y="12.3" width="4.2" height="4.2" fill="#4a86f5"/><rect x="-19.7" y="6.3" width="3.8" height="3.8" fill="#4a86f5"/><rect x="-38.6" y="4.6" width="4.2" height="4.2" fill="#4a86f5"/><rect x="-23.0" y="2.0" width="3.8" height="3.8" fill="#4a86f5"/><rect x="-40.0" y="-3.8" width="4.2" height="4.2" fill="#4a86f5"/><rect x="-23.8" y="-2.9" width="3.8" height="3.8" fill="#4a86f5"/><rect x="-36.8" y="-12.1" width="4.2" height="4.2" fill="#4a86f5"/><rect x="-22.0" y="-7.6" width="3.8" height="3.8" fill="#4a86f5"/><rect x="-29.4" y="-19.1" width="4.2" height="4.2" fill="#4a86f5"/><rect x="-17.7" y="-11.6" width="3.8" height="3.8" fill="#4a86f5"/><rect x="-18.8" y="-24.1" width="4.2" height="4.2" fill="#4a86f5"/><rect x="-11.5" y="-14.5" width="3.8" height="3.8" fill="#4a86f5"/><rect x="-6.1" y="-26.5" width="4.2" height="4.2" fill="#4a86f5"/><rect x="-4.2" y="-15.8" width="3.8" height="3.8" fill="#4a86f5"/><rect x="7.1" y="-25.9" width="4.2" height="4.2" fill="#4a86f5"/><rect x="3.4" y="-15.5" width="3.8" height="3.8" fill="#4a86f5"/><rect x="19.2" y="-22.4" width="4.2" height="4.2" fill="#4a86f5"/><rect x="10.4" y="-13.5" width="3.8" height="3.8" fill="#4a86f5"/><rect x="28.6" y="-16.5" width="4.2" height="4.2" fill="#4a86f5"/><rect x="15.9" y="-10.1" width="3.8" height="3.8" fill="#4a86f5"/><rect x="34.4" y="-8.8" width="4.2" height="4.2" fill="#4a86f5"/><rect x="19.2" y="-5.8" width="3.8" height="3.8" fill="#4a86f5"/><rect x="25.6" y="6.5" width="4.4" height="4.4" fill="#4a86f5"/><rect x="15.0" y="14.0" width="4.4" height="4.4" fill="#4a86f5"/><rect x="-0.2" y="17.3" width="4.4" height="4.4" fill="#4a86f5"/><rect x="-16.0" y="15.3" width="4.4" height="4.4" fill="#4a86f5"/><rect x="-28.0" y="8.6" width="4.4" height="4.4" fill="#4a86f5"/><rect x="-33.1" y="-1.0" width="4.4" height="4.4" fill="#4a86f5"/><rect x="-30.0" y="-10.9" width="4.4" height="4.4" fill="#4a86f5"/><rect x="-19.4" y="-18.4" width="4.4" height="4.4" fill="#4a86f5"/><rect x="-4.2" y="-21.7" width="4.4" height="4.4" fill="#4a86f5"/><rect x="11.6" y="-19.7" width="4.4" height="4.4" fill="#4a86f5"/><rect x="23.6" y="-13.0" width="4.4" height="4.4" fill="#4a86f5"/><rect x="28.7" y="-3.4" width="4.4" height="4.4" fill="#4a86f5"/><ellipse rx="38" ry="24.5" fill="none" stroke="#4a86f5" stroke-width="1.2"/><ellipse rx="15" ry="10" fill="#dde3f5" stroke="#4a86f5" stroke-width="1.2"/><ellipse rx="10.5" ry="7" fill="none" stroke="#151a2c" stroke-width="2.6"/><ellipse rx="4" ry="2.6" fill="#4a86f5"/></g><path d="M423 441 L440 447 L500 477 L560 506 L600 526 L628 540" fill="none" stroke="#4e8aa9" stroke-width="8.5" stroke-linejoin="round" stroke-linecap="round" /><path d="M516 347 L540 355 L600 384 L660 414 L700 436 L716 444" fill="none" stroke="#4e8aa9" stroke-width="7.5" stroke-linejoin="round" stroke-linecap="round" /><path d="M410 456 L464 480 L506 498 L512 506 L476 545 L460 551 L380 510 L370 503 Z" fill="#3f3141" stroke="#4a86f5" stroke-width="1.2" stroke-linejoin="round" /><path d="M416 459 L381.4 509" fill="none" stroke="#7398e2" stroke-width="1.9" stroke-linejoin="round" stroke-linecap="round" /><path d="M434 466.5 L395.3 518" fill="none" stroke="#7398e2" stroke-width="1.9" stroke-linejoin="round" stroke-linecap="round" /><path d="M452.2 475.6 L412 527.6" fill="none" stroke="#7398e2" stroke-width="1.9" stroke-linejoin="round" stroke-linecap="round" /><path d="M463.3 481 L425.8 531" fill="none" stroke="#7398e2" stroke-width="1.9" stroke-linejoin="round" stroke-linecap="round" /><path d="M500.8 502 L462 547.8" fill="none" stroke="#7398e2" stroke-width="1.9" stroke-linejoin="round" stroke-linecap="round" /><path d="M539 520 L628 562 L626 576 L609 633 L539 600 L514 576 L506 557 L509 548 L514 537 L531 523 Z" fill="#1f1512" stroke="#4a86f5" stroke-width="1.2" stroke-linejoin="round" /><path d="M631 568 L660 579 L683 590 L697 602 L706 614 L713 634 L716 650 L720 657 L721 667 L715 667 L704 663 L690 663 L678 669 L611 634 Z" fill="#1c1a1d" stroke="#4a86f5" stroke-width="1.2" stroke-linejoin="round" /><path d="M717.5 671 L726.5 669 L728.5 676 L726 683 L721 689 L712 693 L716 688 L718 683 Z" fill="#1c1a1d" stroke="#4a86f5" stroke-width="1" stroke-linejoin="round" /><path d="M799 509 L884 545 L898 556 L897 572 L880 595 L852 624 L820 655 L795 677 L772 690 L763 690 L735 645 L709 600 L745 560 L780 524 Z" fill="#1c1a1d" stroke="#4a86f5" stroke-width="1.2" stroke-linejoin="round" /><path d="M815 484 L886 544 L820 500 Z" fill="#2a222c" stroke="#4a86f5" stroke-width="1" stroke-linejoin="round" /><path d="M808 496 L886 545 L799 509 Z" fill="#41364b" stroke="#4a86f5" stroke-width="1" stroke-linejoin="round" /><path d="M868 520 L872 530 L884 528 L880 518 Z" fill="#5896b6"/><ellipse cx="878.5" cy="503" rx="12.5" ry="20.5" fill="#5896b6" stroke="#4a86f5" stroke-width="1.6" transform="rotate(17 878.5 503)"/><path d="M346 500 L353 497 L364 510 L359 552 L350 550 L347 528 Z" fill="#c4251a" /><path d="M347 506 L351 505 L351 520 L347 522 Z" fill="#f0f0f0" /><path d="M501 597 L515 602 L527 610 L523 612 L506 604 Z" fill="#c9ced8" /><path d="M606 650 L620 656 L632 664 L628 666 L611 658 Z" fill="#c9ced8" /><path d="M754 713 L760 711.5 L772 716 L784 722 L785 727 L781 731 L770 729 L757 722 Z" fill="#15161a" stroke="#4a86f5" stroke-width="1" stroke-linejoin="round" /><path d="M394 621 L388 623 L347 596 L336 579 L331 564 L331 546 L338 537 L346 528 L346 503 L351.5 494 L367 469 L391 443 L406 426 L453 376 L487 342 L499 332 L512 332.5 L531 337 L565 350.5 L598 365 L653 391 L720 423.5 L772 452.5 L815 481 L858 512 L891 544 L930 563 L985 599 L1020 619 L1036 628 L1046 642 L1052 667 L1050 686 L1044 706 L1030 732 L1008 764 L994 778 L965 803 L934 828 L908 850 L886 853 L863 849 L858 820" fill="none" stroke="#4a86f5" stroke-width="2.1" stroke-linejoin="round" stroke-linecap="round" /><path d="M752 800 L700 778 L664 762 L588 723 L512 679" fill="none" stroke="#4a86f5" stroke-width="2.1" stroke-linejoin="round" stroke-linecap="round" /><path d="M512 348 L690 430 L812 484 L780 524 L745 560 L709 600 L628 540 L423 441 L431 434 L467 394 L512 348" fill="none" stroke="#4a86f5" stroke-width="1.5" stroke-linejoin="round" stroke-linecap="round" /><path d="M709 600 L735 645 L763 690 L790 740 L800 765" fill="none" stroke="#4a86f5" stroke-width="1.2" stroke-linejoin="round" stroke-linecap="round" /><path d="M540 512 L628 556 L690 585 L712 610 L725 650" fill="none" stroke="#4a86f5" stroke-width="1.1" stroke-linejoin="round" stroke-linecap="round" /><path d="M512 580 L504 620 L500 640" fill="none" stroke="#4a86f5" stroke-width="1.1" stroke-linejoin="round" stroke-linecap="round" /><path d="M592 630 L588 690 L588 723" fill="none" stroke="#4a86f5" stroke-width="1.2" stroke-linejoin="round" stroke-linecap="round" /><path d="M772 689 L800 700 L860 740 L916 769" fill="none" stroke="#4a86f5" stroke-width="1.1" stroke-linejoin="round" stroke-linecap="round" /><path d="M891 544 L900 557" fill="none" stroke="#4a86f5" stroke-width="1.1" stroke-linejoin="round" stroke-linecap="round" /><path d="M364 471 L372 500 L460 552" fill="none" stroke="#4a86f5" stroke-width="1.1" stroke-linejoin="round" stroke-linecap="round" /><path d="M331 546 L340 552 L392 590" fill="none" stroke="#4a86f5" stroke-width="1.1" stroke-linejoin="round" stroke-linecap="round" /><path d="M421 437 L440 443 L500 473 L560 502 L600 522 L630 536 L632 543 L626 545 L598 531 L558 511 L498 482 L438 452 L420 445 L421 437" fill="none" stroke="#4a86f5" stroke-width="1.2" stroke-linejoin="round" stroke-linecap="round" /><path d="M514 343 L540 351 L600 380 L660 410 L700 432 L718 441 L719 447 L714 448 L698 441 L658 419 L598 389 L538 360 L514 351 L514 343" fill="none" stroke="#4a86f5" stroke-width="1.2" stroke-linejoin="round" stroke-linecap="round" /><path d="M388 597 Q391 571 414 565 Q454 560 487 591 Q511 620 517 664" fill="none" stroke="#4a86f5" stroke-width="1.4"/><path d="M396 600 Q398 580 416 575 Q450 571 480 598 Q502 624 508 662" fill="none" stroke="#4a86f5" stroke-width="1.2"/><path d="M739 764 Q746 741 772 739 Q808 736 850 752 Q872 761 890 767" fill="none" stroke="#4a86f5" stroke-width="1.4"/><path d="M750 770 Q756 753 774 751 Q806 749 846 764" fill="none" stroke="#4a86f5" stroke-width="1.2"/><path d="M512 626 L582 659" fill="none" stroke="#4a86f5" stroke-width="1.1" stroke-linejoin="round" stroke-linecap="round" /><path d="M594 667 L720 718 L756 742" fill="none" stroke="#4a86f5" stroke-width="1.1" stroke-linejoin="round" stroke-linecap="round" /><path d="M514 664 L588 707 L664 747 L700 763 L752 786" fill="none" stroke="#4a86f5" stroke-width="1.1" stroke-linejoin="round" stroke-linecap="round" /><ellipse cx="514" cy="604.5" rx="15" ry="4.6" fill="none" stroke="#4a86f5" stroke-width="1.2" transform="rotate(28 514 604.5)"/><ellipse cx="619" cy="658" rx="15" ry="4.6" fill="none" stroke="#4a86f5" stroke-width="1.2" transform="rotate(28 619 658)"/><path d="M346 500 L353 497 L364 510 L359 552 L350 550 L347 528 L346 500" fill="none" stroke="#4a86f5" stroke-width="1.2" stroke-linejoin="round" stroke-linecap="round" /><path d="M742.4 680 L740 712 L737.8 743" fill="none" stroke="#4a86f5" stroke-width="1.1" stroke-linejoin="round" stroke-linecap="round" /><rect x="419.3" y="439.3" width="3.4" height="3.4" fill="#4a86f5"/><rect x="628.3" y="538.3" width="3.4" height="3.4" fill="#4a86f5"/><rect x="512.3" y="345.3" width="3.4" height="3.4" fill="#4a86f5"/><rect x="716.3" y="442.3" width="3.4" height="3.4" fill="#4a86f5"/><rect x="386.3" y="595.3" width="3.4" height="3.4" fill="#4a86f5"/><rect x="412.3" y="563.3" width="3.4" height="3.4" fill="#4a86f5"/><rect x="452.3" y="560.3" width="3.4" height="3.4" fill="#4a86f5"/><rect x="485.3" y="589.3" width="3.4" height="3.4" fill="#4a86f5"/><rect x="509.3" y="618.3" width="3.4" height="3.4" fill="#4a86f5"/><rect x="515.3" y="662.3" width="3.4" height="3.4" fill="#4a86f5"/><rect x="737.3" y="762.3" width="3.4" height="3.4" fill="#4a86f5"/><rect x="770.3" y="737.3" width="3.4" height="3.4" fill="#4a86f5"/><rect x="806.3" y="735.3" width="3.4" height="3.4" fill="#4a86f5"/><rect x="848.3" y="750.3" width="3.4" height="3.4" fill="#4a86f5"/><rect x="888.3" y="765.3" width="3.4" height="3.4" fill="#4a86f5"/><rect x="510.3" y="624.3" width="3.4" height="3.4" fill="#4a86f5"/><rect x="580.3" y="657.3" width="3.4" height="3.4" fill="#4a86f5"/><rect x="592.3" y="665.3" width="3.4" height="3.4" fill="#4a86f5"/><rect x="658.3" y="691.3" width="3.4" height="3.4" fill="#4a86f5"/><rect x="718.3" y="716.3" width="3.4" height="3.4" fill="#4a86f5"/><rect x="754.3" y="740.3" width="3.4" height="3.4" fill="#4a86f5"/><rect x="512.3" y="662.3" width="3.4" height="3.4" fill="#4a86f5"/><rect x="586.3" y="705.3" width="3.4" height="3.4" fill="#4a86f5"/><rect x="662.3" y="745.3" width="3.4" height="3.4" fill="#4a86f5"/><rect x="698.3" y="761.3" width="3.4" height="3.4" fill="#4a86f5"/><rect x="498.3" y="598.3" width="3.4" height="3.4" fill="#4a86f5"/><rect x="526.3" y="608.3" width="3.4" height="3.4" fill="#4a86f5"/><rect x="603.3" y="651.3" width="3.4" height="3.4" fill="#4a86f5"/><rect x="631.3" y="662.3" width="3.4" height="3.4" fill="#4a86f5"/><rect x="344.3" y="498.3" width="3.4" height="3.4" fill="#4a86f5"/><rect x="362.3" y="508.3" width="3.4" height="3.4" fill="#4a86f5"/><rect x="357.3" y="550.3" width="3.4" height="3.4" fill="#4a86f5"/><rect x="345.3" y="526.3" width="3.4" height="3.4" fill="#4a86f5"/><rect x="740.3" y="678.3" width="3.4" height="3.4" fill="#4a86f5"/><rect x="736.3" y="741.3" width="3.4" height="3.4" fill="#4a86f5"/><rect x="876.3" y="482.3" width="3.4" height="3.4" fill="#4a86f5"/><rect x="888.3" y="506.3" width="3.4" height="3.4" fill="#4a86f5"/><rect x="866.3" y="518.3" width="3.4" height="3.4" fill="#4a86f5"/><rect x="864.3" y="496.3" width="3.4" height="3.4" fill="#4a86f5"/><path d="M951 768 L968 752 L988 732 L1006 712 L1020 694 L1026 686" fill="none" stroke="#4a86f5" stroke-width="8.5" stroke-linejoin="round" stroke-linecap="round" stroke-dasharray="5 1.6"/><path d="M953 772 L970 756 L990 736 L1008 716 L1022 698" fill="none" stroke="#dfe6f6" stroke-width="1.4" stroke-linejoin="round" stroke-linecap="round" stroke-dasharray="2 3.2"/><path d="M949 764 L966 748 L986 728 L1004 708 L1018 690" fill="none" stroke="#27324a" stroke-width="1.2" stroke-linejoin="round" stroke-linecap="round" stroke-dasharray="1.5 4.5"/><path d="M911 767 L924 759 L946 748 L970 728 L989 707 L1011 678 L1030 646 L1037 629" fill="none" stroke="#4a86f5" stroke-width="1.8" stroke-linejoin="round" stroke-linecap="round" /><path d="M940 784 L955.6 777.8 L978 753.7 L1004 729.6 L1026 705.6 L1037 687 L1042.6 655.6" fill="none" stroke="#4a86f5" stroke-width="1.6" stroke-linejoin="round" stroke-linecap="round" /><path d="M861 838 L905 838 L960 792 L1000 752 L1030 714 L1047 696" fill="none" stroke="#4a86f5" stroke-width="1.4" stroke-linejoin="round" stroke-linecap="round" /><rect x="1035.2" y="627.2" width="3.6" height="3.6" fill="#4a86f5"/><rect x="1028.2" y="644.2" width="3.6" height="3.6" fill="#4a86f5"/><rect x="1009.2" y="676.2" width="3.6" height="3.6" fill="#4a86f5"/><rect x="987.2" y="705.2" width="3.6" height="3.6" fill="#4a86f5"/><rect x="968.2" y="726.2" width="3.6" height="3.6" fill="#4a86f5"/><rect x="944.2" y="746.2" width="3.6" height="3.6" fill="#4a86f5"/><rect x="922.2" y="757.2" width="3.6" height="3.6" fill="#4a86f5"/><rect x="909.2" y="765.2" width="3.6" height="3.6" fill="#4a86f5"/><rect x="1040.8" y="653.8" width="3.6" height="3.6" fill="#4a86f5"/><rect x="1035.2" y="685.2" width="3.6" height="3.6" fill="#4a86f5"/><rect x="1024.2" y="703.8" width="3.6" height="3.6" fill="#4a86f5"/><rect x="1002.2" y="727.8" width="3.6" height="3.6" fill="#4a86f5"/><rect x="976.2" y="751.9" width="3.6" height="3.6" fill="#4a86f5"/><rect x="953.8" y="776" width="3.6" height="3.6" fill="#4a86f5"/><rect x="1038.2" y="638.2" width="3.6" height="3.6" fill="#4a86f5"/><rect x="1033.2" y="660.2" width="3.6" height="3.6" fill="#4a86f5"/><rect x="1022.2" y="666.2" width="3.6" height="3.6" fill="#4a86f5"/><rect x="1032.2" y="682.2" width="3.6" height="3.6" fill="#4a86f5"/><rect x="934.2" y="770.2" width="3.6" height="3.6" fill="#4a86f5"/><rect x="946.2" y="760.2" width="3.6" height="3.6" fill="#4a86f5"/><rect x="958.2" y="788.2" width="3.6" height="3.6" fill="#4a86f5"/><rect x="998.2" y="750.2" width="3.6" height="3.6" fill="#4a86f5"/><rect x="1028.2" y="712.2" width="3.6" height="3.6" fill="#4a86f5"/><rect x="903.2" y="836.2" width="3.6" height="3.6" fill="#4a86f5"/><rect x="497.3" y="330.3" width="3.4" height="3.4" fill="#4a86f5"/><rect x="529.3" y="335.3" width="3.4" height="3.4" fill="#4a86f5"/><rect x="596.3" y="363.3" width="3.4" height="3.4" fill="#4a86f5"/><rect x="718.3" y="421.8" width="3.4" height="3.4" fill="#4a86f5"/><rect x="813.3" y="479.3" width="3.4" height="3.4" fill="#4a86f5"/><rect x="889.3" y="542.3" width="3.4" height="3.4" fill="#4a86f5"/><rect x="983.3" y="597.3" width="3.4" height="3.4" fill="#4a86f5"/><rect x="1034.3" y="626.3" width="3.4" height="3.4" fill="#4a86f5"/><rect x="1050.3" y="665.3" width="3.4" height="3.4" fill="#4a86f5"/><rect x="1042.3" y="704.3" width="3.4" height="3.4" fill="#4a86f5"/><rect x="1006.3" y="762.3" width="3.4" height="3.4" fill="#4a86f5"/><rect x="963.3" y="801.3" width="3.4" height="3.4" fill="#4a86f5"/><rect x="906.3" y="848.3" width="3.4" height="3.4" fill="#4a86f5"/><rect x="861.3" y="847.3" width="3.4" height="3.4" fill="#4a86f5"/><rect x="750.3" y="798.3" width="3.4" height="3.4" fill="#4a86f5"/><rect x="662.3" y="760.3" width="3.4" height="3.4" fill="#4a86f5"/><rect x="510.3" y="677.3" width="3.4" height="3.4" fill="#4a86f5"/><rect x="386.3" y="621.3" width="3.4" height="3.4" fill="#4a86f5"/><rect x="334.3" y="577.3" width="3.4" height="3.4" fill="#4a86f5"/><rect x="329.3" y="544.3" width="3.4" height="3.4" fill="#4a86f5"/><rect x="344.3" y="526.3" width="3.4" height="3.4" fill="#4a86f5"/><rect x="349.8" y="492.3" width="3.4" height="3.4" fill="#4a86f5"/><rect x="389.3" y="441.3" width="3.4" height="3.4" fill="#4a86f5"/><rect x="451.3" y="374.3" width="3.4" height="3.4" fill="#4a86f5"/><rect x="510.3" y="346.3" width="3.4" height="3.4" fill="#4a86f5"/><rect x="688.3" y="428.3" width="3.4" height="3.4" fill="#4a86f5"/><rect x="810.3" y="482.3" width="3.4" height="3.4" fill="#4a86f5"/><rect x="778.3" y="522.3" width="3.4" height="3.4" fill="#4a86f5"/><rect x="743.3" y="558.3" width="3.4" height="3.4" fill="#4a86f5"/><rect x="707.3" y="598.3" width="3.4" height="3.4" fill="#4a86f5"/><rect x="626.3" y="538.3" width="3.4" height="3.4" fill="#4a86f5"/><rect x="421.3" y="439.3" width="3.4" height="3.4" fill="#4a86f5"/><rect x="429.3" y="432.3" width="3.4" height="3.4" fill="#4a86f5"/><rect x="465.3" y="392.3" width="3.4" height="3.4" fill="#4a86f5"/><rect x="408.3" y="454.3" width="3.4" height="3.4" fill="#4a86f5"/><rect x="462.3" y="478.3" width="3.4" height="3.4" fill="#4a86f5"/><rect x="504.3" y="496.3" width="3.4" height="3.4" fill="#4a86f5"/><rect x="510.3" y="504.3" width="3.4" height="3.4" fill="#4a86f5"/><rect x="474.3" y="543.3" width="3.4" height="3.4" fill="#4a86f5"/><rect x="458.3" y="549.3" width="3.4" height="3.4" fill="#4a86f5"/><rect x="378.3" y="508.3" width="3.4" height="3.4" fill="#4a86f5"/><rect x="368.3" y="501.3" width="3.4" height="3.4" fill="#4a86f5"/><rect x="537.3" y="518.3" width="3.4" height="3.4" fill="#4a86f5"/><rect x="624.3" y="574.3" width="3.4" height="3.4" fill="#4a86f5"/><rect x="537.3" y="598.3" width="3.4" height="3.4" fill="#4a86f5"/><rect x="504.3" y="555.3" width="3.4" height="3.4" fill="#4a86f5"/><rect x="512.3" y="535.3" width="3.4" height="3.4" fill="#4a86f5"/><rect x="629.3" y="566.3" width="3.4" height="3.4" fill="#4a86f5"/><rect x="681.3" y="588.3" width="3.4" height="3.4" fill="#4a86f5"/><rect x="704.3" y="612.3" width="3.4" height="3.4" fill="#4a86f5"/><rect x="714.3" y="648.3" width="3.4" height="3.4" fill="#4a86f5"/><rect x="719.3" y="665.3" width="3.4" height="3.4" fill="#4a86f5"/><rect x="702.3" y="661.3" width="3.4" height="3.4" fill="#4a86f5"/><rect x="676.3" y="667.3" width="3.4" height="3.4" fill="#4a86f5"/><rect x="797.3" y="507.3" width="3.4" height="3.4" fill="#4a86f5"/><rect x="896.3" y="554.3" width="3.4" height="3.4" fill="#4a86f5"/><rect x="878.3" y="593.3" width="3.4" height="3.4" fill="#4a86f5"/><rect x="818.3" y="653.3" width="3.4" height="3.4" fill="#4a86f5"/><rect x="770.3" y="688.3" width="3.4" height="3.4" fill="#4a86f5"/><rect x="733.3" y="643.3" width="3.4" height="3.4" fill="#4a86f5"/><rect x="743.3" y="558.3" width="3.4" height="3.4" fill="#4a86f5"/><rect x="586.3" y="721.3" width="3.4" height="3.4" fill="#4a86f5"/><rect x="590.3" y="628.3" width="3.4" height="3.4" fill="#4a86f5"/><rect x="586.3" y="658.3" width="3.4" height="3.4" fill="#4a86f5"/><rect x="502.3" y="618.3" width="3.4" height="3.4" fill="#4a86f5"/><rect x="733.3" y="643.3" width="3.4" height="3.4" fill="#4a86f5"/><rect x="788.3" y="738.3" width="3.4" height="3.4" fill="#4a86f5"/><rect x="798.3" y="698.3" width="3.4" height="3.4" fill="#4a86f5"/><rect x="858.3" y="738.3" width="3.4" height="3.4" fill="#4a86f5"/><rect x="914.3" y="767.3" width="3.4" height="3.4" fill="#4a86f5"/><rect x="438.3" y="445.3" width="3.4" height="3.4" fill="#4a86f5"/><rect x="498.3" y="475.3" width="3.4" height="3.4" fill="#4a86f5"/><rect x="558.3" y="504.3" width="3.4" height="3.4" fill="#4a86f5"/><rect x="598.3" y="524.3" width="3.4" height="3.4" fill="#4a86f5"/><rect x="538.3" y="353.3" width="3.4" height="3.4" fill="#4a86f5"/><rect x="598.3" y="382.3" width="3.4" height="3.4" fill="#4a86f5"/><rect x="658.3" y="412.3" width="3.4" height="3.4" fill="#4a86f5"/><rect x="698.3" y="434.3" width="3.4" height="3.4" fill="#4a86f5"/><rect x="370.3" y="498.3" width="3.4" height="3.4" fill="#4a86f5"/><rect x="458.3" y="550.3" width="3.4" height="3.4" fill="#4a86f5"/><rect x="338.3" y="550.3" width="3.4" height="3.4" fill="#4a86f5"/><rect x="390.3" y="588.3" width="3.4" height="3.4" fill="#4a86f5"/></svg>
<svg class="b" style="left:1058px;top:351px;" width="80" height="80" viewBox="0 0 80 80"><circle cx="40.1" cy="39.9" r="34.6" fill="#fff" stroke="#f0ea38" stroke-width="4"/><path d="M39.3 40 V55 L43.2 51.2 L49.8 50.2 Z" fill="#dedede" stroke="#111" stroke-width="1.1" stroke-linejoin="miter"/></svg>
<div class="b" style="left:664px;top:739px;width:57px;height:26.5px;background:#cfd0d2;border-radius:4px;box-shadow:0 1px 3px rgba(0,0,0,.35);"></div>
<span class="t" style="left:669.5px;top:747.0px;font-size:12px;line-height:12px;color:#111;letter-spacing:0.268px;">-30°,45°</span>
<div class="b" style="left:437.5px;top:771px;width:510px;height:43.5px;background:#4b4b4b;border:1px solid #2e2e2e;border-radius:4px;box-sizing:border-box;box-shadow:0 1px 4px rgba(0,0,0,.4);"></div>
<div class="b" style="left:443.5px;top:778px;width:4.5px;height:30px;background:#9c9c9c;border-radius:2px;"></div>
<svg class="b" style="left:466px;top:785px;" width="14" height="14" viewBox="0 0 14 14"><path d="M7 1 L13 7.5 H9.5 V13 H4.5 V7.5 H1 Z" fill="#d0d0d0"/></svg>
<div class="b" style="left:488px;top:791px;width:195px;height:1.4px;background:#7c7c7c;"></div>
<div class="b" style="left:586px;top:786.5px;width:1px;height:10px;background:#6c6c6c;"></div>
<svg class="b" style="left:543px;top:771px;" width="40" height="40" viewBox="0 0 40 40"><circle cx="20" cy="20" r="17" fill="#50556a" opacity="0.35"/><circle cx="20" cy="20" r="17" fill="none" stroke="#62687f" stroke-width="1" opacity="0.6"/><circle cx="20" cy="19.5" r="5" fill="#4b4b4b" stroke="#f0f0f0" stroke-width="2"/></svg>
<svg class="b" style="left:691px;top:785px;" width="14" height="14" viewBox="0 0 14 14"><path d="M7 13 L13 6.5 H9.5 V1 H4.5 V6.5 H1 Z" fill="#d0d0d0"/></svg>
<div class="b" style="left:711px;top:780.5px;width:124px;height:25.5px;border:1px solid #727272;border-radius:2px;box-sizing:border-box;"></div>
<svg class="b" style="left:719px;top:785px;" width="17" height="17" viewBox="0 0 17 17"><rect x="1" y="1" width="9" height="9" fill="#d0d0d0"/><rect x="5.5" y="5.5" width="10.5" height="10.5" fill="#d0d0d0" stroke="#4b4b4b" stroke-width="1.4"/><path d="M10.8 7.8 V13.8 M7.8 10.8 H13.8" stroke="#4b4b4b" stroke-width="1.5"/></svg>
<span class="t" style="left:743.0px;top:788.0px;font-size:12.5px;line-height:12.5px;color:#f2f2f2;letter-spacing:0.118px;">Insérer une vue</span>
<svg class="b" style="left:839px;top:785px;" width="16" height="14" viewBox="0 0 16 14"><path d="M4.5 7.5 A4.4 4.4 0 1 1 9 11" fill="none" stroke="#cfcfcf" stroke-width="1.6"/><path d="M1.2 5.5 L4.6 9.6 L7.6 5.2 Z" fill="#cfcfcf"/><path d="M2 12.5 H14" stroke="#cfcfcf" stroke-width="1.3"/></svg>
<svg class="b" style="left:864px;top:784px;" width="17" height="16" viewBox="0 0 17 16"><rect x="1" y="7" width="3.4" height="8" fill="#cfcfcf"/><path d="M5.5 7.5 L8.5 1.5 Q10.8 1.2 10.4 4 L10 6.2 H14.2 Q16 6.4 15.6 8.2 L14.2 13.8 Q13.8 15 12.4 15 H5.5 Z" fill="#cfcfcf"/></svg>
<svg class="b" style="left:892px;top:785px;" width="17" height="16" viewBox="0 0 17 16"><rect x="1" y="1" width="3.4" height="8" fill="#cfcfcf"/><path d="M5.5 8.5 L8.5 14.5 Q10.8 14.8 10.4 12 L10 9.8 H14.2 Q16 9.6 15.6 7.8 L14.2 2.2 Q13.8 1 12.4 1 H5.5 Z" fill="#cfcfcf"/></svg>
<svg class="b" style="left:920px;top:784px;" width="15" height="16" viewBox="0 0 15 16"><path d="M2 1 V15" stroke="#cfcfcf" stroke-width="1.8"/><path d="M3.5 2 H8 V3.5 H13.5 L12 6.5 L13.5 9.5 H7.5 V8 H3.5 Z" fill="#cfcfcf"/></svg>
<div class="b" style="left:167px;top:937px;width:1052px;height:48.5px;background:#1473e6;"></div>
<svg class="b" style="left:182.5px;top:953.5px;" width="17" height="17" viewBox="0 0 17 17"><circle cx="8.5" cy="8.5" r="8.1" fill="#fff"/><rect x="7.4" y="7.2" width="2.3" height="5.8" fill="#1473e6"/><circle cx="8.5" cy="4.8" r="1.4" fill="#1473e6"/></svg>
<span class="t" style="left:212.0px;top:956.0px;font-size:12px;line-height:12px;color:#fff;letter-spacing:-0.078px;">Les nuanciers Pantone ne sont plus disponibles, car les accords de licence entre Pantone et Adobe ont changé.</span>
<div class="b" style="left:1060px;top:946.5px;width:96px;height:28.5px;border:1px solid #fff;border-radius:15px;box-sizing:border-box;"></div>
<span class="t" style="left:1067.5px;top:956.0px;font-size:12px;line-height:12px;color:#fff;font-weight:bold;letter-spacing:-0.079px;">En savoir plus</span>
<div class="b" style="left:1175px;top:947px;width:1px;height:28px;background:#3f8cea;"></div>
<svg class="b" style="left:1191px;top:954px;" width="14" height="14" viewBox="0 0 14 14"><path d="M1.5 1.5 L12.5 12.5 M12.5 1.5 L1.5 12.5" stroke="#fff" stroke-width="1.8"/></svg>
<svg class="b" style="left:1300.5px;top:98.5px;" width="10" height="8" viewBox="0 0 10 8"><path d="M1.2 6.2 L5 2.4 L8.8 6.2" fill="none" stroke="#b4b4b4" stroke-width="1.7"/></svg>
<div class="b" style="left:1298.5px;top:385.5px;width:13px;height:25.5px;background:#5f5f5f;border-radius:6.5px;"></div>
<svg class="b" style="left:1300.5px;top:1002px;" width="10" height="8" viewBox="0 0 10 8"><path d="M1.2 1.8 L5 5.6 L8.8 1.8" fill="none" stroke="#8e8e8e" stroke-width="1.5"/></svg>
<svg class="b" style="left:78.5px;top:995px;" width="15" height="15" viewBox="0 0 15 15"><circle cx="7.5" cy="7.5" r="7" fill="#b4b4b4"/><path d="M5.2 5.8 Q5.3 3.4 7.6 3.4 Q9.9 3.4 9.9 5.4 Q9.9 6.7 8.5 7.4 Q7.6 7.9 7.6 9" fill="none" stroke="#535353" stroke-width="1.5"/><circle cx="7.6" cy="11.2" r="1" fill="#535353"/></svg>
<span class="t" style="left:103.7px;top:998.0px;font-size:10px;line-height:10px;color:#cacaca;font-weight:bold;letter-spacing:-0.181px;">Sélectionnez le tracé ou le point d’ancrage d’un objet</span>
<span class="t" style="left:354.0px;top:998.0px;font-size:10px;line-height:10px;color:#cacaca;font-weight:bold;">|</span>
<span class="t" style="left:363.0px;top:998.0px;font-size:10px;line-height:10px;color:#cacaca;font-weight:bold;letter-spacing:-0.283px;">Maj+cliquez pour sélectionner plusieurs points d’ancrage ou tracés</span>
<div class="b" style="left:74px;top:1013.5px;width:1223px;height:1px;background:#484848;"></div>
<div class="b" style="left:78px;top:1016px;width:50px;height:16px;background:#464646;"></div>
<div class="b" style="left:129px;top:1016px;width:17px;height:16px;background:#464646;"></div>
<div class="b" style="left:151px;top:1016px;width:50px;height:16px;background:#464646;"></div>
<div class="b" style="left:202px;top:1016px;width:17px;height:16px;background:#464646;"></div>
<div class="b" style="left:261px;top:1016px;width:40.5px;height:16px;background:#464646;"></div>
<div class="b" style="left:302px;top:1016px;width:17px;height:16px;background:#464646;"></div>
<span class="t" style="left:81.5px;top:1021.0px;font-size:10px;line-height:10px;color:#ececec;letter-spacing:-0.497px;">105,78%</span>
<span class="t" style="left:154.5px;top:1021.0px;font-size:10px;line-height:10px;color:#ececec;">0°</span>
<span class="t" style="left:265.0px;top:1021.0px;font-size:10px;line-height:10px;color:#ececec;">1</span>
<svg class="b" style="left:131.5px;top:1020.5px;" width="12" height="10" viewBox="0 0 12 10"><path d="M2.8 3.2 l3.2 3.2 l3.2 -3.2" fill="none" stroke="#d8d8d8" stroke-width="1.5"/></svg>
<svg class="b" style="left:204.5px;top:1020.5px;" width="12" height="10" viewBox="0 0 12 10"><path d="M2.8 3.2 l3.2 3.2 l3.2 -3.2" fill="none" stroke="#d8d8d8" stroke-width="1.5"/></svg>
<svg class="b" style="left:304.5px;top:1020.5px;" width="12" height="10" viewBox="0 0 12 10"><path d="M2.8 3.2 l3.2 3.2 l3.2 -3.2" fill="none" stroke="#d8d8d8" stroke-width="1.5"/></svg>
<svg class="b" style="left:227px;top:1020px;" width="10" height="9" viewBox="0 0 10 9"><path d="M1.5 0.5 V8.5" stroke="#6a6a6a" stroke-width="1.6"/><path d="M9 0.5 L3.5 4.5 L9 8.5 Z" fill="#6a6a6a"/></svg>
<svg class="b" style="left:246px;top:1020px;" width="7" height="9" viewBox="0 0 7 9"><path d="M6.5 0.5 L1 4.5 L6.5 8.5 Z" fill="#6a6a6a"/></svg>
<svg class="b" style="left:328px;top:1020px;" width="7" height="9" viewBox="0 0 7 9"><path d="M0.5 0.5 L6 4.5 L0.5 8.5 Z" fill="#6a6a6a"/></svg>
<svg class="b" style="left:343px;top:1020px;" width="10" height="9" viewBox="0 0 10 9"><path d="M8.5 0.5 V8.5" stroke="#6a6a6a" stroke-width="1.6"/><path d="M1 0.5 L6.5 4.5 L1 8.5 Z" fill="#6a6a6a"/></svg>
<div class="b" style="left:360px;top:1015px;width:1px;height:17px;background:#484848;"></div>
<span class="t" style="left:424.4px;top:1021.0px;font-size:10px;line-height:10px;color:#d6d6d6;letter-spacing:-0.103px;">Sélection directe</span>
<svg class="b" style="left:567px;top:1020px;" width="7" height="9" viewBox="0 0 7 9"><path d="M0.5 0.5 L6 4.5 L0.5 8.5 Z" fill="#d6d6d6"/></svg>
<div class="b" style="left:580px;top:1014px;width:1px;height:18px;background:#484848;"></div>
<svg class="b" style="left:584px;top:1020px;" width="6" height="9" viewBox="0 0 6 9"><path d="M5 1 L1.5 4.5 L5 8" fill="none" stroke="#8a8a8a" stroke-width="1.3"/></svg>
<div class="b" style="left:1018px;top:1017.5px;width:26px;height:11px;background:#6a6a6a;border-radius:5.5px;"></div>
<svg class="b" style="left:1285px;top:1020px;" width="6" height="9" viewBox="0 0 6 9"><path d="M1 1 L4.5 4.5 L1 8" fill="none" stroke="#8a8a8a" stroke-width="1.3"/></svg>
<div class="b" style="left:0px;top:1032px;width:1920px;height:48px;background:#212121;"></div>
<div class="b" style="left:11.2px;top:1046px;width:3.2px;height:22px;background:#f3a71d;border-radius:1px;"></div>
<div class="b" style="left:164.2px;top:1046px;width:3.2px;height:22px;background:#f3a71d;border-radius:1px;"></div>
<span class="t" style="left:24.6px;top:1042.8px;font-size:29px;line-height:29px;color:#fafafa;transform:scaleX(0.9522);transform-origin:0 0;">FS OF CG</span>
<div class="b" style="left:1285.4px;top:1050px;width:3.4px;height:21px;background:#f3a71d;border-radius:1px;"></div>
<span class="t" style="left:1299.8px;top:1047.3px;font-size:29px;line-height:29px;color:#fafafa;transform:scaleX(0.9745);transform-origin:0 0;">LA ROTATION GÉNÉRATIVE</span>
<div class="b" style="left:1680px;top:1050px;width:3.4px;height:21px;background:#f3a71d;border-radius:1px;"></div>
<span class="t" style="left:1692.4px;top:1047.3px;font-size:29px;line-height:29px;color:#eaa51a;transform:scaleX(0.9922);transform-origin:0 0;">ILLUSTRATOR</span>
<div class="b" style="left:1905.2px;top:1050px;width:3.4px;height:21px;background:#f3a71d;border-radius:1px;"></div>
<svg class="b" style="left:1700px;top:815px;" width="200" height="195" viewBox="0 0 1108 1080"><defs><clipPath id="wc"><circle cx="552" cy="535" r="498"/></clipPath><filter id="wb" x="-5%" y="-5%" width="110%" height="110%"><feGaussianBlur stdDeviation="5"/></filter><radialGradient id="wsh" cx="0.5" cy="0.5" r="0.5"><stop offset="0.93" stop-color="#000" stop-opacity="0.55"/><stop offset="1" stop-color="#000" stop-opacity="0"/></radialGradient></defs><circle cx="552" cy="541" r="520" fill="url(#wsh)"/><g clip-path="url(#wc)"><g filter="url(#wb)"><rect x="0" y="0" width="1108" height="1080" fill="#2b2829"/><rect x="40" y="360" width="260" height="230" fill="#6c6b6b"/><rect x="40" y="420" width="260" height="8" fill="#3c3b3b"/><rect x="40" y="480" width="260" height="8" fill="#3c3b3b"/><rect x="40" y="540" width="260" height="8" fill="#3c3b3b"/><rect x="40" y="640" width="200" height="100" fill="#5a5a5b"/><rect x="120" y="90" width="230" height="180" fill="#e4e3df"/><circle cx="215" cy="185" r="82" fill="#1b1b1c"/><rect x="390" y="40" width="320" height="180" fill="#e2e2e2"/><rect x="425" y="40" width="250" height="165" fill="#4e4b49"/><rect x="730" y="60" width="120" height="150" fill="#1f1d1e"/><rect x="60" y="285" width="260" height="18" fill="#6b4638"/><rect x="90" y="320" width="210" height="34" fill="#c0201c"/><rect x="60" y="590" width="150" height="18" fill="#6b4638"/><rect x="780" y="180" width="280" height="420" fill="#2e2020"/><rect x="830" y="200" width="120" height="60" fill="#b4241f"/><rect x="820" y="310" width="230" height="40" fill="#9c1d1a"/><rect x="880" y="370" width="45" height="190" fill="#c5322b"/><rect x="800" y="290" width="260" height="16" fill="#6b4638"/><rect x="780" y="585" width="280" height="16" fill="#6b4638"/><rect x="800" y="640" width="240" height="200" fill="#25282b"/><rect x="930" y="700" width="50" height="90" fill="#5c7a4a"/><path d="M100 780 L170 640 L250 470 L310 520 L340 760 L180 870 Z" fill="#37393d"/><path d="M170 690 L250 480 L285 500 L215 700 Z" fill="#8d9097"/><path d="M700 690 L800 720 L890 800 L905 880 L690 820 Z" fill="#4a4d52"/><path d="M170 870 L330 770 L420 800 L560 960 L700 800 L905 880 L960 1080 L120 1080 Z" fill="#dfe3ea"/><path d="M380 760 L720 780 L700 850 L590 1010 L470 960 L400 860 Z" fill="#a98672"/><ellipse cx="525" cy="632" rx="212" ry="258" fill="#cdb2a6"/><ellipse cx="290" cy="590" rx="28" ry="58" fill="#c0a090"/><path d="M330 700 Q420 860 560 890 Q690 860 740 700 Q700 800 560 820 Q420 810 330 700 Z" fill="#a98f80"/><ellipse cx="570" cy="790" rx="75" ry="22" fill="#5a3a36"/><path d="M312 350 L322 240 L400 165 L560 138 L700 195 L760 270 L600 262 L480 255 L380 290 L330 380 Z" fill="#dfe0e4"/><path d="M300 490 L305 370 L350 290 L480 240 L700 232 L830 265 L852 300 L805 385 L745 430 L700 385 L520 365 L380 410 L325 470 Z" fill="#19191b"/><rect x="478" y="196" width="120" height="30" rx="8" fill="#3a3a3e"/><path d="M315 515 L420 565 L600 575 L780 545 L780 650 L760 680 L650 685 L615 610 L575 612 L560 680 L430 690 L400 650 L395 590 L315 540 Z" fill="#121213"/><path d="M428 598 L578 590 L548 668 L438 672 Z" fill="#a9958c"/><path d="M632 588 L760 572 L758 656 L660 664 Z" fill="#a9958c"/></g></g></svg>
</body></html>
